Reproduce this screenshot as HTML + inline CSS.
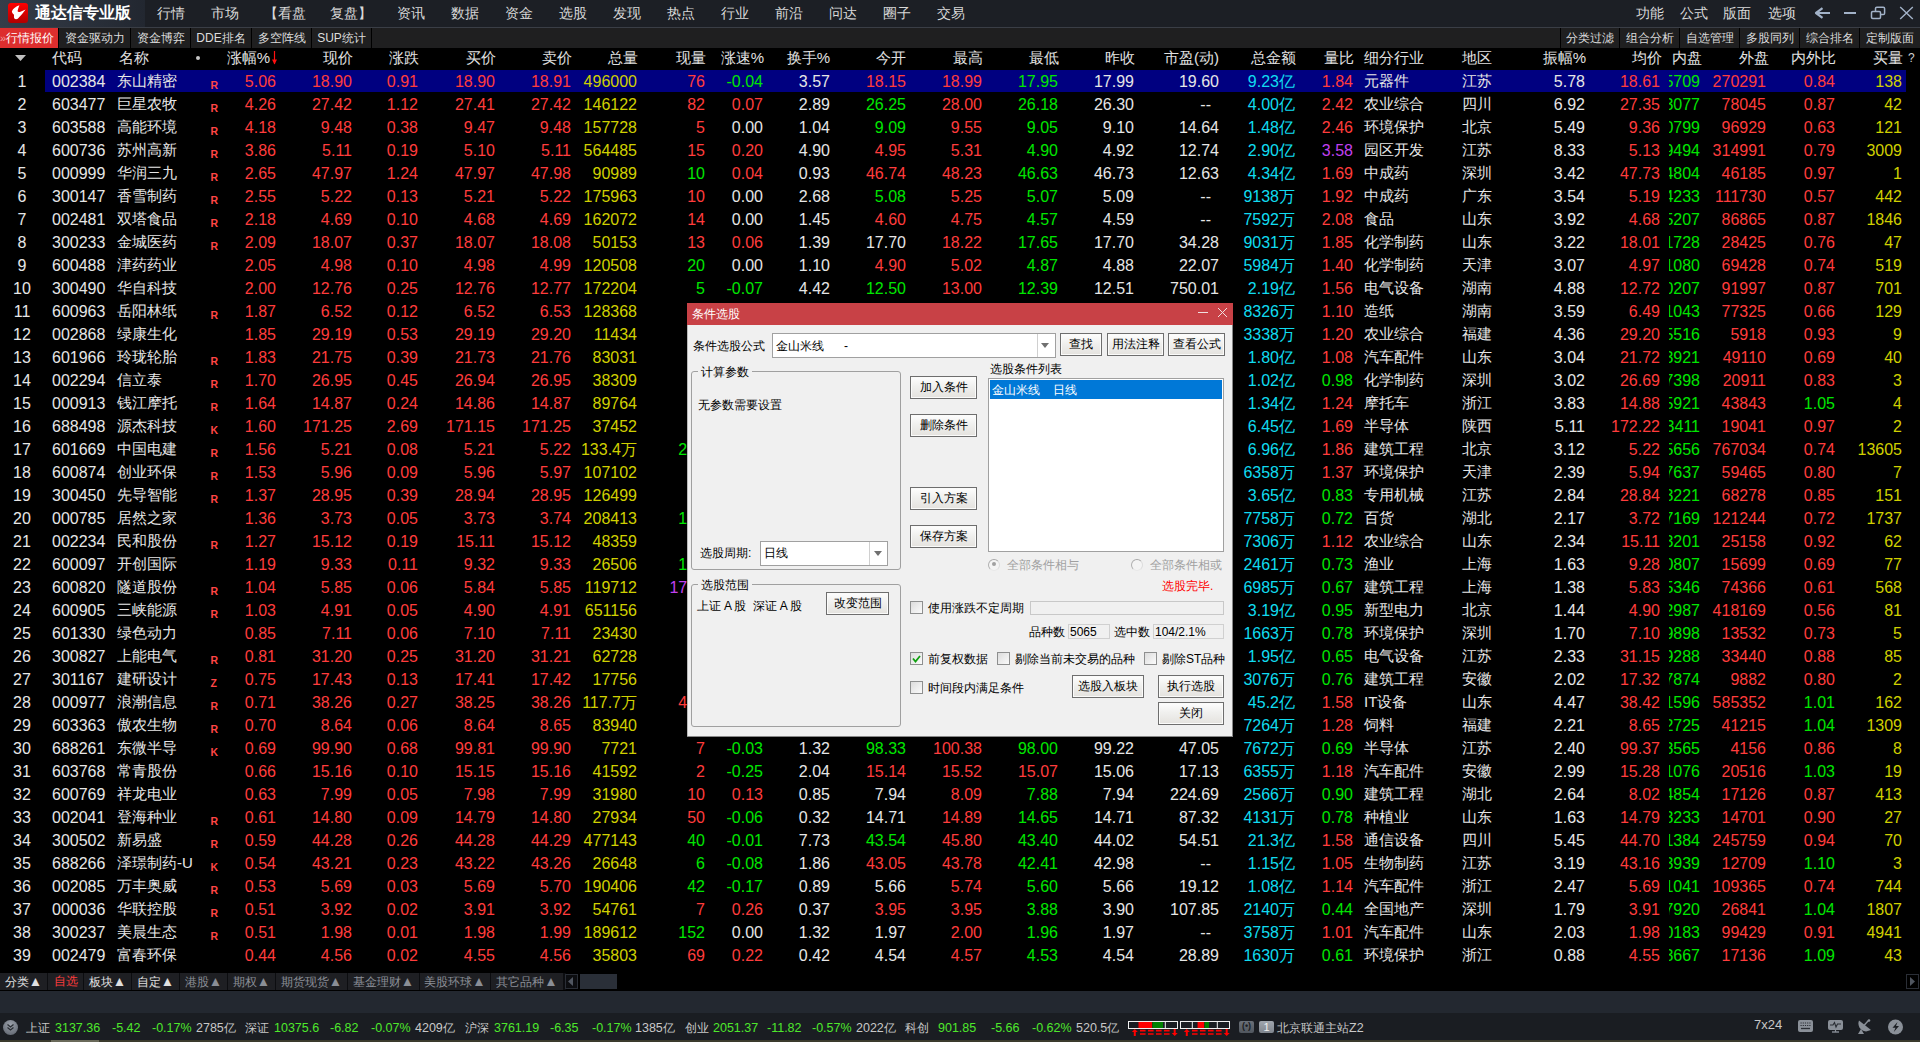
<!DOCTYPE html><html><head><meta charset="utf-8"><style>
*{margin:0;padding:0;box-sizing:border-box}
html,body{width:1920px;height:1042px;overflow:hidden;background:#000;font-family:"Liberation Sans",sans-serif;}
.a{position:absolute;white-space:nowrap}
.n{position:absolute;white-space:nowrap;text-align:right;width:120px;font-size:16px;line-height:23px;height:23px}
.l{position:absolute;white-space:nowrap;font-size:16px;line-height:23px;height:23px}
.h{position:absolute;white-space:nowrap;font-size:15px;line-height:22px;height:22px;top:47px;color:#e0e0e0}
.z{font-size:15px;line-height:22px}
.hr{text-align:right;width:120px}
.tab{position:absolute;top:28px;height:20px;background:#1e1f23;color:#dcdcdc;font-size:12px;line-height:20px;text-align:center}
.btab{position:absolute;top:973px;height:17px;background:#1e1f23;color:#e0e0e0;font-size:12px;line-height:17px}
.tri{font-size:13.5px;line-height:17px}
.mk{position:absolute;font-size:10.5px;font-weight:bold;color:#ff4646;line-height:10px}
.dlg{position:absolute;left:687px;top:303px;width:546px;height:434px;background:#f0f0f0;font-size:12px;color:#000;border-right:1px solid #888;border-bottom:1px solid #888;box-shadow:inset 1px 0 0 #b8b8b8}
.dlg .a{line-height:14px}
.btn{position:absolute;background:linear-gradient(#fefefe,#f0f0ee 45%,#e4e2de);border:1px solid #6e6e6e;box-shadow:inset 0 0 0 1px #fbfbfa;text-align:center;font-size:12px;line-height:20px;color:#000}
.cb{position:absolute;width:13px;height:13px;border:1px solid #8e8f8f;background:linear-gradient(135deg,#dcdcdc,#fbfbfb)}
.grp{position:absolute;border:1px solid #a0a0a0;border-radius:3px}
.gl{position:absolute;background:#f0f0f0;padding:0 3px;line-height:14px}
.fld{position:absolute;background:#fff;border:1px solid #a0a0a0}
.st{position:absolute;top:1014px;line-height:28px;height:28px;font-size:12.5px;white-space:nowrap}
.stz{font-size:12px}
</style></head><body>
<div class="a" style="left:0;top:0;width:1920px;height:27px;background:#1c1f25"></div>
<div class="a" style="left:0;top:0;width:145px;height:27px;background:linear-gradient(90deg,#353d49,#222730)"></div>
<div class="a" style="left:0;top:27px;width:1920px;height:1px;background:#3a3e46"></div>
<div class="a" style="left:8px;top:3px;width:20px;height:20px;border-radius:3px;background:linear-gradient(#ff0000,#b00000)"></div>
<svg class="a" style="left:8px;top:3px" width="20" height="20" viewBox="0 0 20 20"><path d="M11.4 2.2 C10.5 4.5 9.8 6.5 9.6 8.3 C9.8 9.2 11 9.3 12.5 8.8 L17.6 6.5 C15.5 9.5 12.5 13 9.8 15.8 C8.5 16.4 6.8 16.3 6.2 15.2 C5.8 13.8 6 12.5 6 11.7 C5 11 3.8 9.5 3.9 8.2 C5 5.5 8 3.5 11.4 2.2 Z" fill="#fff"/></svg>
<div class="a" style="left:35px;top:2px;font-size:16px;line-height:22px;font-weight:bold;color:#fff">通达信专业版</div>
<div class="a" style="left:157px;top:2px;font-size:14px;line-height:22px;color:#d8d8d8">行情</div>
<div class="a" style="left:211px;top:2px;font-size:14px;line-height:22px;color:#d8d8d8">市场</div>
<div class="a" style="left:264px;top:2px;font-size:14px;line-height:22px;color:#d8d8d8">【看盘</div>
<div class="a" style="left:330px;top:2px;font-size:14px;line-height:22px;color:#d8d8d8">复盘】</div>
<div class="a" style="left:397px;top:2px;font-size:14px;line-height:22px;color:#d8d8d8">资讯</div>
<div class="a" style="left:451px;top:2px;font-size:14px;line-height:22px;color:#d8d8d8">数据</div>
<div class="a" style="left:505px;top:2px;font-size:14px;line-height:22px;color:#d8d8d8">资金</div>
<div class="a" style="left:559px;top:2px;font-size:14px;line-height:22px;color:#d8d8d8">选股</div>
<div class="a" style="left:613px;top:2px;font-size:14px;line-height:22px;color:#d8d8d8">发现</div>
<div class="a" style="left:667px;top:2px;font-size:14px;line-height:22px;color:#d8d8d8">热点</div>
<div class="a" style="left:721px;top:2px;font-size:14px;line-height:22px;color:#d8d8d8">行业</div>
<div class="a" style="left:775px;top:2px;font-size:14px;line-height:22px;color:#d8d8d8">前沿</div>
<div class="a" style="left:829px;top:2px;font-size:14px;line-height:22px;color:#d8d8d8">问达</div>
<div class="a" style="left:883px;top:2px;font-size:14px;line-height:22px;color:#d8d8d8">圈子</div>
<div class="a" style="left:937px;top:2px;font-size:14px;line-height:22px;color:#d8d8d8">交易</div>
<div class="a" style="left:1636px;top:2px;font-size:14px;line-height:22px;color:#d8d8d8">功能</div>
<div class="a" style="left:1680px;top:2px;font-size:14px;line-height:22px;color:#d8d8d8">公式</div>
<div class="a" style="left:1723px;top:2px;font-size:14px;line-height:22px;color:#d8d8d8">版面</div>
<div class="a" style="left:1768px;top:2px;font-size:14px;line-height:22px;color:#d8d8d8">选项</div>
<svg class="a" style="left:1812px;top:5px" width="108" height="18" viewBox="0 0 108 18"><path d="M4 8 H18" stroke="#a2b2c8" stroke-width="2" fill="none"/><path d="M10.5 3.2 L4 8 L10.5 12.8" stroke="#a2b2c8" stroke-width="2.2" fill="none" stroke-linejoin="round"/><path d="M32 8 H44" stroke="#a2b2c8" stroke-width="2"/><path d="M63.5 6 V3.5 Q63.5 2.2 64.8 2.2 H71.3 Q72.6 2.2 72.6 3.5 V8.3 Q72.6 9.6 71.3 9.6 H69" stroke="#a2b2c8" stroke-width="1.5" fill="none"/><rect x="59.5" y="6.5" width="9" height="7" rx="1.2" stroke="#a2b2c8" stroke-width="1.5" fill="none"/><path d="M88.2 2 L100.8 14 M100.8 2 L88.2 14" stroke="#a2b2c8" stroke-width="1.4"/></svg>
<div class="a" style="left:0;top:28px;width:1920px;height:20px;background:#1f1f20"></div>
<div class="a" style="left:0;top:28px;width:58px;height:20px;background:#dd2e2e"></div>
<div class="a" style="left:58px;top:28px;width:1px;height:20px;background:#000"></div>
<div class="a" style="left:130px;top:28px;width:1px;height:20px;background:#000"></div>
<div class="a" style="left:190px;top:28px;width:1px;height:20px;background:#000"></div>
<div class="a" style="left:251px;top:28px;width:1px;height:20px;background:#000"></div>
<div class="a" style="left:311px;top:28px;width:1px;height:20px;background:#000"></div>
<div class="a" style="left:371px;top:28px;width:1px;height:20px;background:#000"></div>
<div class="a" style="left:1560px;top:28px;width:1px;height:20px;background:#000"></div>
<div class="a" style="left:1619px;top:28px;width:1px;height:20px;background:#000"></div>
<div class="a" style="left:1679px;top:28px;width:1px;height:20px;background:#000"></div>
<div class="a" style="left:1739px;top:28px;width:1px;height:20px;background:#000"></div>
<div class="a" style="left:1799px;top:28px;width:1px;height:20px;background:#000"></div>
<div class="a" style="left:1859px;top:28px;width:1px;height:20px;background:#000"></div>
<div class="a" style="left:2px;top:28px;width:55px;height:20px;font-size:12px;line-height:20px;text-align:center;color:#fff">行情报价</div>
<div class="a" style="left:59px;top:28px;width:71px;height:20px;font-size:12px;line-height:20px;text-align:center;color:#dcdcdc">资金驱动力</div>
<div class="a" style="left:131px;top:28px;width:59px;height:20px;font-size:12px;line-height:20px;text-align:center;color:#dcdcdc">资金博弈</div>
<div class="a" style="left:191px;top:28px;width:60px;height:20px;font-size:12px;line-height:20px;text-align:center;color:#dcdcdc">DDE排名</div>
<div class="a" style="left:252px;top:28px;width:59px;height:20px;font-size:12px;line-height:20px;text-align:center;color:#dcdcdc">多空阵线</div>
<div class="a" style="left:312px;top:28px;width:59px;height:20px;font-size:12px;line-height:20px;text-align:center;color:#dcdcdc">SUP统计</div>
<div class="a" style="left:1561px;top:28px;width:58px;height:20px;font-size:12px;line-height:20px;text-align:center;color:#dcdcdc">分类过滤</div>
<div class="a" style="left:1620px;top:28px;width:59px;height:20px;font-size:12px;line-height:20px;text-align:center;color:#dcdcdc">组合分析</div>
<div class="a" style="left:1680px;top:28px;width:59px;height:20px;font-size:12px;line-height:20px;text-align:center;color:#dcdcdc">自选管理</div>
<div class="a" style="left:1740px;top:28px;width:59px;height:20px;font-size:12px;line-height:20px;text-align:center;color:#dcdcdc">多股同列</div>
<div class="a" style="left:1800px;top:28px;width:59px;height:20px;font-size:12px;line-height:20px;text-align:center;color:#dcdcdc">综合排名</div>
<div class="a" style="left:1860px;top:28px;width:60px;height:20px;font-size:12px;line-height:20px;text-align:center;color:#dcdcdc">定制版面</div>
<div class="a" style="left:0px;top:31px;font-size:11px;line-height:14px;color:#f0a0a0">»</div>
<div class="h" style="left:52px">代码</div>
<div class="h" style="left:119px">名称</div>
<div class="h hr" style="left:150px">涨幅%</div>
<div class="h hr" style="left:233px">现价</div>
<div class="h hr" style="left:299px">涨跌</div>
<div class="h hr" style="left:376px">买价</div>
<div class="h hr" style="left:452px">卖价</div>
<div class="h hr" style="left:518px">总量</div>
<div class="h hr" style="left:586px">现量</div>
<div class="h hr" style="left:644px">涨速%</div>
<div class="h hr" style="left:710px">换手%</div>
<div class="h hr" style="left:786px">今开</div>
<div class="h hr" style="left:863px">最高</div>
<div class="h hr" style="left:939px">最低</div>
<div class="h hr" style="left:1015px">昨收</div>
<div class="h hr" style="left:1099px">市盈(动)</div>
<div class="h hr" style="left:1176px">总金额</div>
<div class="h hr" style="left:1234px">量比</div>
<div class="h" style="left:1364px">细分行业</div>
<div class="h" style="left:1462px">地区</div>
<div class="h hr" style="left:1466px">振幅%</div>
<div class="h hr" style="left:1542px">均价</div>
<div class="h hr" style="left:1582px">内盘</div>
<div class="h hr" style="left:1649px">外盘</div>
<div class="h hr" style="left:1716px">内外比</div>
<div class="h hr" style="left:1783px">买量</div>
<svg class="a" style="left:15px;top:55px" width="12" height="8"><path d="M0 0 H11 L5.5 6 Z" fill="#c0c0c0"/></svg>
<div class="a" style="left:196px;top:56px;width:4px;height:4px;border-radius:2px;background:#c8c8c8"></div>
<svg class="a" style="left:271px;top:50px" width="7" height="16"><path d="M3.5 1 V14" stroke="#ff1010" stroke-width="1.2"/><path d="M1 9.5 L3.5 14.5 L6 9.5 Z" fill="#ff1010"/></svg>
<div class="a" style="left:1908px;top:50px;font-size:12px;line-height:16px;color:#d0d0d0">?</div>
<div class="a" style="left:45px;top:70px;width:1861px;height:22px;background:#000080"></div>
<div class="l" style="left:2px;width:40px;text-align:center;top:70px;color:#e6e6e6">1</div>
<div class="l" style="left:52px;top:70px;color:#e6e6e6">002384</div>
<div class="l z" style="left:117px;top:70px;color:#e6e6e6">东山精密</div>
<div class="mk" style="left:210.5px;top:80px">R</div>
<div class="n" style="left:156px;top:70px;color:#ff3c3c">5.06</div>
<div class="n" style="left:232px;top:70px;color:#ff3c3c">18.90</div>
<div class="n" style="left:298px;top:70px;color:#ff3c3c">0.91</div>
<div class="n" style="left:375px;top:70px;color:#ff3c3c">18.90</div>
<div class="n" style="left:451px;top:70px;color:#ff3c3c">18.91</div>
<div class="n" style="left:517px;top:70px;color:#d0d000">496000</div>
<div class="n" style="left:585px;top:70px;color:#ff3c3c">76</div>
<div class="n" style="left:643px;top:70px;color:#00e600">-0.04</div>
<div class="n" style="left:710px;top:70px;color:#e6e6e6">3.57</div>
<div class="n" style="left:786px;top:70px;color:#ff3c3c">18.15</div>
<div class="n" style="left:862px;top:70px;color:#ff3c3c">18.99</div>
<div class="n" style="left:938px;top:70px;color:#00e600">17.95</div>
<div class="n" style="left:1014px;top:70px;color:#e6e6e6">17.99</div>
<div class="n" style="left:1099px;top:70px;color:#e6e6e6">19.60</div>
<div class="n" style="left:1175px;top:70px;color:#10dcf0">9.23亿</div>
<div class="n" style="left:1233px;top:70px;color:#ff3c3c">1.84</div>
<div class="n" style="left:1465px;top:70px;color:#e6e6e6">5.78</div>
<div class="n" style="left:1540px;top:70px;color:#ff3c3c">18.61</div>
<div class="n" style="left:1646px;top:70px;color:#ff3c3c">270291</div>
<div class="n" style="left:1715px;top:70px;color:#ff3c3c">0.84</div>
<div class="n" style="left:1782px;top:70px;color:#d0d000">138</div>
<div class="l z" style="left:1364px;top:70px;color:#e6e6e6">元器件</div>
<div class="l z" style="left:1462px;top:70px;color:#e6e6e6">江苏</div>
<div class="a" style="left:1669px;top:70px;width:33px;height:23px;overflow:hidden"><div class="n" style="left:-89px;top:0;color:#00e600">5709</div></div>
<div class="l" style="left:2px;width:40px;text-align:center;top:93px;color:#e6e6e6">2</div>
<div class="l" style="left:52px;top:93px;color:#e6e6e6">603477</div>
<div class="l z" style="left:117px;top:93px;color:#e6e6e6">巨星农牧</div>
<div class="mk" style="left:210.5px;top:103px">R</div>
<div class="n" style="left:156px;top:93px;color:#ff3c3c">4.26</div>
<div class="n" style="left:232px;top:93px;color:#ff3c3c">27.42</div>
<div class="n" style="left:298px;top:93px;color:#ff3c3c">1.12</div>
<div class="n" style="left:375px;top:93px;color:#ff3c3c">27.41</div>
<div class="n" style="left:451px;top:93px;color:#ff3c3c">27.42</div>
<div class="n" style="left:517px;top:93px;color:#d0d000">146122</div>
<div class="n" style="left:585px;top:93px;color:#ff3c3c">82</div>
<div class="n" style="left:643px;top:93px;color:#ff3c3c">0.07</div>
<div class="n" style="left:710px;top:93px;color:#e6e6e6">2.89</div>
<div class="n" style="left:786px;top:93px;color:#00e600">26.25</div>
<div class="n" style="left:862px;top:93px;color:#ff3c3c">28.00</div>
<div class="n" style="left:938px;top:93px;color:#00e600">26.18</div>
<div class="n" style="left:1014px;top:93px;color:#e6e6e6">26.30</div>
<div class="n" style="left:1091px;top:93px;color:#e6e6e6">--</div>
<div class="n" style="left:1175px;top:93px;color:#10dcf0">4.00亿</div>
<div class="n" style="left:1233px;top:93px;color:#ff3c3c">2.42</div>
<div class="n" style="left:1465px;top:93px;color:#e6e6e6">6.92</div>
<div class="n" style="left:1540px;top:93px;color:#ff3c3c">27.35</div>
<div class="n" style="left:1646px;top:93px;color:#ff3c3c">78045</div>
<div class="n" style="left:1715px;top:93px;color:#ff3c3c">0.87</div>
<div class="n" style="left:1782px;top:93px;color:#d0d000">42</div>
<div class="l z" style="left:1364px;top:93px;color:#e6e6e6">农业综合</div>
<div class="l z" style="left:1462px;top:93px;color:#e6e6e6">四川</div>
<div class="a" style="left:1669px;top:93px;width:33px;height:23px;overflow:hidden"><div class="n" style="left:-89px;top:0;color:#00e600">3077</div></div>
<div class="l" style="left:2px;width:40px;text-align:center;top:116px;color:#e6e6e6">3</div>
<div class="l" style="left:52px;top:116px;color:#e6e6e6">603588</div>
<div class="l z" style="left:117px;top:116px;color:#e6e6e6">高能环境</div>
<div class="mk" style="left:210.5px;top:126px">R</div>
<div class="n" style="left:156px;top:116px;color:#ff3c3c">4.18</div>
<div class="n" style="left:232px;top:116px;color:#ff3c3c">9.48</div>
<div class="n" style="left:298px;top:116px;color:#ff3c3c">0.38</div>
<div class="n" style="left:375px;top:116px;color:#ff3c3c">9.47</div>
<div class="n" style="left:451px;top:116px;color:#ff3c3c">9.48</div>
<div class="n" style="left:517px;top:116px;color:#d0d000">157728</div>
<div class="n" style="left:585px;top:116px;color:#ff3c3c">5</div>
<div class="n" style="left:643px;top:116px;color:#e6e6e6">0.00</div>
<div class="n" style="left:710px;top:116px;color:#e6e6e6">1.04</div>
<div class="n" style="left:786px;top:116px;color:#00e600">9.09</div>
<div class="n" style="left:862px;top:116px;color:#ff3c3c">9.55</div>
<div class="n" style="left:938px;top:116px;color:#00e600">9.05</div>
<div class="n" style="left:1014px;top:116px;color:#e6e6e6">9.10</div>
<div class="n" style="left:1099px;top:116px;color:#e6e6e6">14.64</div>
<div class="n" style="left:1175px;top:116px;color:#10dcf0">1.48亿</div>
<div class="n" style="left:1233px;top:116px;color:#ff3c3c">2.46</div>
<div class="n" style="left:1465px;top:116px;color:#e6e6e6">5.49</div>
<div class="n" style="left:1540px;top:116px;color:#ff3c3c">9.36</div>
<div class="n" style="left:1646px;top:116px;color:#ff3c3c">96929</div>
<div class="n" style="left:1715px;top:116px;color:#ff3c3c">0.63</div>
<div class="n" style="left:1782px;top:116px;color:#d0d000">121</div>
<div class="l z" style="left:1364px;top:116px;color:#e6e6e6">环境保护</div>
<div class="l z" style="left:1462px;top:116px;color:#e6e6e6">北京</div>
<div class="a" style="left:1669px;top:116px;width:33px;height:23px;overflow:hidden"><div class="n" style="left:-89px;top:0;color:#00e600">0799</div></div>
<div class="l" style="left:2px;width:40px;text-align:center;top:139px;color:#e6e6e6">4</div>
<div class="l" style="left:52px;top:139px;color:#e6e6e6">600736</div>
<div class="l z" style="left:117px;top:139px;color:#e6e6e6">苏州高新</div>
<div class="mk" style="left:210.5px;top:149px">R</div>
<div class="n" style="left:156px;top:139px;color:#ff3c3c">3.86</div>
<div class="n" style="left:232px;top:139px;color:#ff3c3c">5.11</div>
<div class="n" style="left:298px;top:139px;color:#ff3c3c">0.19</div>
<div class="n" style="left:375px;top:139px;color:#ff3c3c">5.10</div>
<div class="n" style="left:451px;top:139px;color:#ff3c3c">5.11</div>
<div class="n" style="left:517px;top:139px;color:#d0d000">564485</div>
<div class="n" style="left:585px;top:139px;color:#ff3c3c">15</div>
<div class="n" style="left:643px;top:139px;color:#ff3c3c">0.20</div>
<div class="n" style="left:710px;top:139px;color:#e6e6e6">4.90</div>
<div class="n" style="left:786px;top:139px;color:#ff3c3c">4.95</div>
<div class="n" style="left:862px;top:139px;color:#ff3c3c">5.31</div>
<div class="n" style="left:938px;top:139px;color:#00e600">4.90</div>
<div class="n" style="left:1014px;top:139px;color:#e6e6e6">4.92</div>
<div class="n" style="left:1099px;top:139px;color:#e6e6e6">12.74</div>
<div class="n" style="left:1175px;top:139px;color:#10dcf0">2.90亿</div>
<div class="n" style="left:1233px;top:139px;color:#c040f0">3.58</div>
<div class="n" style="left:1465px;top:139px;color:#e6e6e6">8.33</div>
<div class="n" style="left:1540px;top:139px;color:#ff3c3c">5.13</div>
<div class="n" style="left:1646px;top:139px;color:#ff3c3c">314991</div>
<div class="n" style="left:1715px;top:139px;color:#ff3c3c">0.79</div>
<div class="n" style="left:1782px;top:139px;color:#d0d000">3009</div>
<div class="l z" style="left:1364px;top:139px;color:#e6e6e6">园区开发</div>
<div class="l z" style="left:1462px;top:139px;color:#e6e6e6">江苏</div>
<div class="a" style="left:1669px;top:139px;width:33px;height:23px;overflow:hidden"><div class="n" style="left:-89px;top:0;color:#00e600">9494</div></div>
<div class="l" style="left:2px;width:40px;text-align:center;top:162px;color:#e6e6e6">5</div>
<div class="l" style="left:52px;top:162px;color:#e6e6e6">000999</div>
<div class="l z" style="left:117px;top:162px;color:#e6e6e6">华润三九</div>
<div class="mk" style="left:210.5px;top:172px">R</div>
<div class="n" style="left:156px;top:162px;color:#ff3c3c">2.65</div>
<div class="n" style="left:232px;top:162px;color:#ff3c3c">47.97</div>
<div class="n" style="left:298px;top:162px;color:#ff3c3c">1.24</div>
<div class="n" style="left:375px;top:162px;color:#ff3c3c">47.97</div>
<div class="n" style="left:451px;top:162px;color:#ff3c3c">47.98</div>
<div class="n" style="left:517px;top:162px;color:#d0d000">90989</div>
<div class="n" style="left:585px;top:162px;color:#00e600">10</div>
<div class="n" style="left:643px;top:162px;color:#ff3c3c">0.04</div>
<div class="n" style="left:710px;top:162px;color:#e6e6e6">0.93</div>
<div class="n" style="left:786px;top:162px;color:#ff3c3c">46.74</div>
<div class="n" style="left:862px;top:162px;color:#ff3c3c">48.23</div>
<div class="n" style="left:938px;top:162px;color:#00e600">46.63</div>
<div class="n" style="left:1014px;top:162px;color:#e6e6e6">46.73</div>
<div class="n" style="left:1099px;top:162px;color:#e6e6e6">12.63</div>
<div class="n" style="left:1175px;top:162px;color:#10dcf0">4.34亿</div>
<div class="n" style="left:1233px;top:162px;color:#ff3c3c">1.69</div>
<div class="n" style="left:1465px;top:162px;color:#e6e6e6">3.42</div>
<div class="n" style="left:1540px;top:162px;color:#ff3c3c">47.73</div>
<div class="n" style="left:1646px;top:162px;color:#ff3c3c">46185</div>
<div class="n" style="left:1715px;top:162px;color:#ff3c3c">0.97</div>
<div class="n" style="left:1782px;top:162px;color:#d0d000">1</div>
<div class="l z" style="left:1364px;top:162px;color:#e6e6e6">中成药</div>
<div class="l z" style="left:1462px;top:162px;color:#e6e6e6">深圳</div>
<div class="a" style="left:1669px;top:162px;width:33px;height:23px;overflow:hidden"><div class="n" style="left:-89px;top:0;color:#00e600">4804</div></div>
<div class="l" style="left:2px;width:40px;text-align:center;top:185px;color:#e6e6e6">6</div>
<div class="l" style="left:52px;top:185px;color:#e6e6e6">300147</div>
<div class="l z" style="left:117px;top:185px;color:#e6e6e6">香雪制药</div>
<div class="mk" style="left:210.5px;top:195px">R</div>
<div class="n" style="left:156px;top:185px;color:#ff3c3c">2.55</div>
<div class="n" style="left:232px;top:185px;color:#ff3c3c">5.22</div>
<div class="n" style="left:298px;top:185px;color:#ff3c3c">0.13</div>
<div class="n" style="left:375px;top:185px;color:#ff3c3c">5.21</div>
<div class="n" style="left:451px;top:185px;color:#ff3c3c">5.22</div>
<div class="n" style="left:517px;top:185px;color:#d0d000">175963</div>
<div class="n" style="left:585px;top:185px;color:#ff3c3c">10</div>
<div class="n" style="left:643px;top:185px;color:#e6e6e6">0.00</div>
<div class="n" style="left:710px;top:185px;color:#e6e6e6">2.68</div>
<div class="n" style="left:786px;top:185px;color:#00e600">5.08</div>
<div class="n" style="left:862px;top:185px;color:#ff3c3c">5.25</div>
<div class="n" style="left:938px;top:185px;color:#00e600">5.07</div>
<div class="n" style="left:1014px;top:185px;color:#e6e6e6">5.09</div>
<div class="n" style="left:1091px;top:185px;color:#e6e6e6">--</div>
<div class="n" style="left:1175px;top:185px;color:#10dcf0">9138万</div>
<div class="n" style="left:1233px;top:185px;color:#ff3c3c">1.92</div>
<div class="n" style="left:1465px;top:185px;color:#e6e6e6">3.54</div>
<div class="n" style="left:1540px;top:185px;color:#ff3c3c">5.19</div>
<div class="n" style="left:1646px;top:185px;color:#ff3c3c">111730</div>
<div class="n" style="left:1715px;top:185px;color:#ff3c3c">0.57</div>
<div class="n" style="left:1782px;top:185px;color:#d0d000">442</div>
<div class="l z" style="left:1364px;top:185px;color:#e6e6e6">中成药</div>
<div class="l z" style="left:1462px;top:185px;color:#e6e6e6">广东</div>
<div class="a" style="left:1669px;top:185px;width:33px;height:23px;overflow:hidden"><div class="n" style="left:-89px;top:0;color:#00e600">4233</div></div>
<div class="l" style="left:2px;width:40px;text-align:center;top:208px;color:#e6e6e6">7</div>
<div class="l" style="left:52px;top:208px;color:#e6e6e6">002481</div>
<div class="l z" style="left:117px;top:208px;color:#e6e6e6">双塔食品</div>
<div class="mk" style="left:210.5px;top:218px">R</div>
<div class="n" style="left:156px;top:208px;color:#ff3c3c">2.18</div>
<div class="n" style="left:232px;top:208px;color:#ff3c3c">4.69</div>
<div class="n" style="left:298px;top:208px;color:#ff3c3c">0.10</div>
<div class="n" style="left:375px;top:208px;color:#ff3c3c">4.68</div>
<div class="n" style="left:451px;top:208px;color:#ff3c3c">4.69</div>
<div class="n" style="left:517px;top:208px;color:#d0d000">162072</div>
<div class="n" style="left:585px;top:208px;color:#ff3c3c">14</div>
<div class="n" style="left:643px;top:208px;color:#e6e6e6">0.00</div>
<div class="n" style="left:710px;top:208px;color:#e6e6e6">1.45</div>
<div class="n" style="left:786px;top:208px;color:#ff3c3c">4.60</div>
<div class="n" style="left:862px;top:208px;color:#ff3c3c">4.75</div>
<div class="n" style="left:938px;top:208px;color:#00e600">4.57</div>
<div class="n" style="left:1014px;top:208px;color:#e6e6e6">4.59</div>
<div class="n" style="left:1091px;top:208px;color:#e6e6e6">--</div>
<div class="n" style="left:1175px;top:208px;color:#10dcf0">7592万</div>
<div class="n" style="left:1233px;top:208px;color:#ff3c3c">2.08</div>
<div class="n" style="left:1465px;top:208px;color:#e6e6e6">3.92</div>
<div class="n" style="left:1540px;top:208px;color:#ff3c3c">4.68</div>
<div class="n" style="left:1646px;top:208px;color:#ff3c3c">86865</div>
<div class="n" style="left:1715px;top:208px;color:#ff3c3c">0.87</div>
<div class="n" style="left:1782px;top:208px;color:#d0d000">1846</div>
<div class="l z" style="left:1364px;top:208px;color:#e6e6e6">食品</div>
<div class="l z" style="left:1462px;top:208px;color:#e6e6e6">山东</div>
<div class="a" style="left:1669px;top:208px;width:33px;height:23px;overflow:hidden"><div class="n" style="left:-89px;top:0;color:#00e600">5207</div></div>
<div class="l" style="left:2px;width:40px;text-align:center;top:231px;color:#e6e6e6">8</div>
<div class="l" style="left:52px;top:231px;color:#e6e6e6">300233</div>
<div class="l z" style="left:117px;top:231px;color:#e6e6e6">金城医药</div>
<div class="mk" style="left:210.5px;top:241px">R</div>
<div class="n" style="left:156px;top:231px;color:#ff3c3c">2.09</div>
<div class="n" style="left:232px;top:231px;color:#ff3c3c">18.07</div>
<div class="n" style="left:298px;top:231px;color:#ff3c3c">0.37</div>
<div class="n" style="left:375px;top:231px;color:#ff3c3c">18.07</div>
<div class="n" style="left:451px;top:231px;color:#ff3c3c">18.08</div>
<div class="n" style="left:517px;top:231px;color:#d0d000">50153</div>
<div class="n" style="left:585px;top:231px;color:#ff3c3c">13</div>
<div class="n" style="left:643px;top:231px;color:#ff3c3c">0.06</div>
<div class="n" style="left:710px;top:231px;color:#e6e6e6">1.39</div>
<div class="n" style="left:786px;top:231px;color:#e6e6e6">17.70</div>
<div class="n" style="left:862px;top:231px;color:#ff3c3c">18.22</div>
<div class="n" style="left:938px;top:231px;color:#00e600">17.65</div>
<div class="n" style="left:1014px;top:231px;color:#e6e6e6">17.70</div>
<div class="n" style="left:1099px;top:231px;color:#e6e6e6">34.28</div>
<div class="n" style="left:1175px;top:231px;color:#10dcf0">9031万</div>
<div class="n" style="left:1233px;top:231px;color:#ff3c3c">1.85</div>
<div class="n" style="left:1465px;top:231px;color:#e6e6e6">3.22</div>
<div class="n" style="left:1540px;top:231px;color:#ff3c3c">18.01</div>
<div class="n" style="left:1646px;top:231px;color:#ff3c3c">28425</div>
<div class="n" style="left:1715px;top:231px;color:#ff3c3c">0.76</div>
<div class="n" style="left:1782px;top:231px;color:#d0d000">47</div>
<div class="l z" style="left:1364px;top:231px;color:#e6e6e6">化学制药</div>
<div class="l z" style="left:1462px;top:231px;color:#e6e6e6">山东</div>
<div class="a" style="left:1669px;top:231px;width:33px;height:23px;overflow:hidden"><div class="n" style="left:-89px;top:0;color:#00e600">1728</div></div>
<div class="l" style="left:2px;width:40px;text-align:center;top:254px;color:#e6e6e6">9</div>
<div class="l" style="left:52px;top:254px;color:#e6e6e6">600488</div>
<div class="l z" style="left:117px;top:254px;color:#e6e6e6">津药药业</div>
<div class="n" style="left:156px;top:254px;color:#ff3c3c">2.05</div>
<div class="n" style="left:232px;top:254px;color:#ff3c3c">4.98</div>
<div class="n" style="left:298px;top:254px;color:#ff3c3c">0.10</div>
<div class="n" style="left:375px;top:254px;color:#ff3c3c">4.98</div>
<div class="n" style="left:451px;top:254px;color:#ff3c3c">4.99</div>
<div class="n" style="left:517px;top:254px;color:#d0d000">120508</div>
<div class="n" style="left:585px;top:254px;color:#00e600">20</div>
<div class="n" style="left:643px;top:254px;color:#e6e6e6">0.00</div>
<div class="n" style="left:710px;top:254px;color:#e6e6e6">1.10</div>
<div class="n" style="left:786px;top:254px;color:#ff3c3c">4.90</div>
<div class="n" style="left:862px;top:254px;color:#ff3c3c">5.02</div>
<div class="n" style="left:938px;top:254px;color:#00e600">4.87</div>
<div class="n" style="left:1014px;top:254px;color:#e6e6e6">4.88</div>
<div class="n" style="left:1099px;top:254px;color:#e6e6e6">22.07</div>
<div class="n" style="left:1175px;top:254px;color:#10dcf0">5984万</div>
<div class="n" style="left:1233px;top:254px;color:#ff3c3c">1.40</div>
<div class="n" style="left:1465px;top:254px;color:#e6e6e6">3.07</div>
<div class="n" style="left:1540px;top:254px;color:#ff3c3c">4.97</div>
<div class="n" style="left:1646px;top:254px;color:#ff3c3c">69428</div>
<div class="n" style="left:1715px;top:254px;color:#ff3c3c">0.74</div>
<div class="n" style="left:1782px;top:254px;color:#d0d000">519</div>
<div class="l z" style="left:1364px;top:254px;color:#e6e6e6">化学制药</div>
<div class="l z" style="left:1462px;top:254px;color:#e6e6e6">天津</div>
<div class="a" style="left:1669px;top:254px;width:33px;height:23px;overflow:hidden"><div class="n" style="left:-89px;top:0;color:#00e600">1080</div></div>
<div class="l" style="left:2px;width:40px;text-align:center;top:277px;color:#e6e6e6">10</div>
<div class="l" style="left:52px;top:277px;color:#e6e6e6">300490</div>
<div class="l z" style="left:117px;top:277px;color:#e6e6e6">华自科技</div>
<div class="n" style="left:156px;top:277px;color:#ff3c3c">2.00</div>
<div class="n" style="left:232px;top:277px;color:#ff3c3c">12.76</div>
<div class="n" style="left:298px;top:277px;color:#ff3c3c">0.25</div>
<div class="n" style="left:375px;top:277px;color:#ff3c3c">12.76</div>
<div class="n" style="left:451px;top:277px;color:#ff3c3c">12.77</div>
<div class="n" style="left:517px;top:277px;color:#d0d000">172204</div>
<div class="n" style="left:585px;top:277px;color:#00e600">5</div>
<div class="n" style="left:643px;top:277px;color:#00e600">-0.07</div>
<div class="n" style="left:710px;top:277px;color:#e6e6e6">4.42</div>
<div class="n" style="left:786px;top:277px;color:#00e600">12.50</div>
<div class="n" style="left:862px;top:277px;color:#ff3c3c">13.00</div>
<div class="n" style="left:938px;top:277px;color:#00e600">12.39</div>
<div class="n" style="left:1014px;top:277px;color:#e6e6e6">12.51</div>
<div class="n" style="left:1099px;top:277px;color:#e6e6e6">750.01</div>
<div class="n" style="left:1175px;top:277px;color:#10dcf0">2.19亿</div>
<div class="n" style="left:1233px;top:277px;color:#ff3c3c">1.56</div>
<div class="n" style="left:1465px;top:277px;color:#e6e6e6">4.88</div>
<div class="n" style="left:1540px;top:277px;color:#ff3c3c">12.72</div>
<div class="n" style="left:1646px;top:277px;color:#ff3c3c">91997</div>
<div class="n" style="left:1715px;top:277px;color:#ff3c3c">0.87</div>
<div class="n" style="left:1782px;top:277px;color:#d0d000">701</div>
<div class="l z" style="left:1364px;top:277px;color:#e6e6e6">电气设备</div>
<div class="l z" style="left:1462px;top:277px;color:#e6e6e6">湖南</div>
<div class="a" style="left:1669px;top:277px;width:33px;height:23px;overflow:hidden"><div class="n" style="left:-89px;top:0;color:#00e600">0207</div></div>
<div class="l" style="left:2px;width:40px;text-align:center;top:300px;color:#e6e6e6">11</div>
<div class="l" style="left:52px;top:300px;color:#e6e6e6">600963</div>
<div class="l z" style="left:117px;top:300px;color:#e6e6e6">岳阳林纸</div>
<div class="mk" style="left:210.5px;top:310px">R</div>
<div class="n" style="left:156px;top:300px;color:#ff3c3c">1.87</div>
<div class="n" style="left:232px;top:300px;color:#ff3c3c">6.52</div>
<div class="n" style="left:298px;top:300px;color:#ff3c3c">0.12</div>
<div class="n" style="left:375px;top:300px;color:#ff3c3c">6.52</div>
<div class="n" style="left:451px;top:300px;color:#ff3c3c">6.53</div>
<div class="n" style="left:517px;top:300px;color:#d0d000">128368</div>
<div class="n" style="left:1175px;top:300px;color:#10dcf0">8326万</div>
<div class="n" style="left:1233px;top:300px;color:#ff3c3c">1.10</div>
<div class="n" style="left:1465px;top:300px;color:#e6e6e6">3.59</div>
<div class="n" style="left:1540px;top:300px;color:#ff3c3c">6.49</div>
<div class="n" style="left:1646px;top:300px;color:#ff3c3c">77325</div>
<div class="n" style="left:1715px;top:300px;color:#ff3c3c">0.66</div>
<div class="n" style="left:1782px;top:300px;color:#d0d000">129</div>
<div class="l z" style="left:1364px;top:300px;color:#e6e6e6">造纸</div>
<div class="l z" style="left:1462px;top:300px;color:#e6e6e6">湖南</div>
<div class="a" style="left:1669px;top:300px;width:33px;height:23px;overflow:hidden"><div class="n" style="left:-89px;top:0;color:#00e600">1043</div></div>
<div class="l" style="left:2px;width:40px;text-align:center;top:323px;color:#e6e6e6">12</div>
<div class="l" style="left:52px;top:323px;color:#e6e6e6">002868</div>
<div class="l z" style="left:117px;top:323px;color:#e6e6e6">绿康生化</div>
<div class="n" style="left:156px;top:323px;color:#ff3c3c">1.85</div>
<div class="n" style="left:232px;top:323px;color:#ff3c3c">29.19</div>
<div class="n" style="left:298px;top:323px;color:#ff3c3c">0.53</div>
<div class="n" style="left:375px;top:323px;color:#ff3c3c">29.19</div>
<div class="n" style="left:451px;top:323px;color:#ff3c3c">29.20</div>
<div class="n" style="left:517px;top:323px;color:#d0d000">11434</div>
<div class="n" style="left:1175px;top:323px;color:#10dcf0">3338万</div>
<div class="n" style="left:1233px;top:323px;color:#ff3c3c">1.20</div>
<div class="n" style="left:1465px;top:323px;color:#e6e6e6">4.36</div>
<div class="n" style="left:1540px;top:323px;color:#ff3c3c">29.20</div>
<div class="n" style="left:1646px;top:323px;color:#ff3c3c">5918</div>
<div class="n" style="left:1715px;top:323px;color:#ff3c3c">0.93</div>
<div class="n" style="left:1782px;top:323px;color:#d0d000">9</div>
<div class="l z" style="left:1364px;top:323px;color:#e6e6e6">农业综合</div>
<div class="l z" style="left:1462px;top:323px;color:#e6e6e6">福建</div>
<div class="a" style="left:1669px;top:323px;width:33px;height:23px;overflow:hidden"><div class="n" style="left:-89px;top:0;color:#00e600">5516</div></div>
<div class="l" style="left:2px;width:40px;text-align:center;top:346px;color:#e6e6e6">13</div>
<div class="l" style="left:52px;top:346px;color:#e6e6e6">601966</div>
<div class="l z" style="left:117px;top:346px;color:#e6e6e6">玲珑轮胎</div>
<div class="mk" style="left:210.5px;top:356px">R</div>
<div class="n" style="left:156px;top:346px;color:#ff3c3c">1.83</div>
<div class="n" style="left:232px;top:346px;color:#ff3c3c">21.75</div>
<div class="n" style="left:298px;top:346px;color:#ff3c3c">0.39</div>
<div class="n" style="left:375px;top:346px;color:#ff3c3c">21.73</div>
<div class="n" style="left:451px;top:346px;color:#ff3c3c">21.76</div>
<div class="n" style="left:517px;top:346px;color:#d0d000">83031</div>
<div class="n" style="left:1175px;top:346px;color:#10dcf0">1.80亿</div>
<div class="n" style="left:1233px;top:346px;color:#ff3c3c">1.08</div>
<div class="n" style="left:1465px;top:346px;color:#e6e6e6">3.04</div>
<div class="n" style="left:1540px;top:346px;color:#ff3c3c">21.72</div>
<div class="n" style="left:1646px;top:346px;color:#ff3c3c">49110</div>
<div class="n" style="left:1715px;top:346px;color:#ff3c3c">0.69</div>
<div class="n" style="left:1782px;top:346px;color:#d0d000">40</div>
<div class="l z" style="left:1364px;top:346px;color:#e6e6e6">汽车配件</div>
<div class="l z" style="left:1462px;top:346px;color:#e6e6e6">山东</div>
<div class="a" style="left:1669px;top:346px;width:33px;height:23px;overflow:hidden"><div class="n" style="left:-89px;top:0;color:#00e600">3921</div></div>
<div class="l" style="left:2px;width:40px;text-align:center;top:369px;color:#e6e6e6">14</div>
<div class="l" style="left:52px;top:369px;color:#e6e6e6">002294</div>
<div class="l z" style="left:117px;top:369px;color:#e6e6e6">信立泰</div>
<div class="mk" style="left:210.5px;top:379px">R</div>
<div class="n" style="left:156px;top:369px;color:#ff3c3c">1.70</div>
<div class="n" style="left:232px;top:369px;color:#ff3c3c">26.95</div>
<div class="n" style="left:298px;top:369px;color:#ff3c3c">0.45</div>
<div class="n" style="left:375px;top:369px;color:#ff3c3c">26.94</div>
<div class="n" style="left:451px;top:369px;color:#ff3c3c">26.95</div>
<div class="n" style="left:517px;top:369px;color:#d0d000">38309</div>
<div class="n" style="left:1175px;top:369px;color:#10dcf0">1.02亿</div>
<div class="n" style="left:1233px;top:369px;color:#00e600">0.98</div>
<div class="n" style="left:1465px;top:369px;color:#e6e6e6">3.02</div>
<div class="n" style="left:1540px;top:369px;color:#ff3c3c">26.69</div>
<div class="n" style="left:1646px;top:369px;color:#ff3c3c">20911</div>
<div class="n" style="left:1715px;top:369px;color:#ff3c3c">0.83</div>
<div class="n" style="left:1782px;top:369px;color:#d0d000">3</div>
<div class="l z" style="left:1364px;top:369px;color:#e6e6e6">化学制药</div>
<div class="l z" style="left:1462px;top:369px;color:#e6e6e6">深圳</div>
<div class="a" style="left:1669px;top:369px;width:33px;height:23px;overflow:hidden"><div class="n" style="left:-89px;top:0;color:#00e600">7398</div></div>
<div class="l" style="left:2px;width:40px;text-align:center;top:392px;color:#e6e6e6">15</div>
<div class="l" style="left:52px;top:392px;color:#e6e6e6">000913</div>
<div class="l z" style="left:117px;top:392px;color:#e6e6e6">钱江摩托</div>
<div class="mk" style="left:210.5px;top:402px">R</div>
<div class="n" style="left:156px;top:392px;color:#ff3c3c">1.64</div>
<div class="n" style="left:232px;top:392px;color:#ff3c3c">14.87</div>
<div class="n" style="left:298px;top:392px;color:#ff3c3c">0.24</div>
<div class="n" style="left:375px;top:392px;color:#ff3c3c">14.86</div>
<div class="n" style="left:451px;top:392px;color:#ff3c3c">14.87</div>
<div class="n" style="left:517px;top:392px;color:#d0d000">89764</div>
<div class="n" style="left:1175px;top:392px;color:#10dcf0">1.34亿</div>
<div class="n" style="left:1233px;top:392px;color:#ff3c3c">1.24</div>
<div class="n" style="left:1465px;top:392px;color:#e6e6e6">3.83</div>
<div class="n" style="left:1540px;top:392px;color:#ff3c3c">14.88</div>
<div class="n" style="left:1646px;top:392px;color:#ff3c3c">43843</div>
<div class="n" style="left:1715px;top:392px;color:#00e600">1.05</div>
<div class="n" style="left:1782px;top:392px;color:#d0d000">4</div>
<div class="l z" style="left:1364px;top:392px;color:#e6e6e6">摩托车</div>
<div class="l z" style="left:1462px;top:392px;color:#e6e6e6">浙江</div>
<div class="a" style="left:1669px;top:392px;width:33px;height:23px;overflow:hidden"><div class="n" style="left:-89px;top:0;color:#00e600">5921</div></div>
<div class="l" style="left:2px;width:40px;text-align:center;top:415px;color:#e6e6e6">16</div>
<div class="l" style="left:52px;top:415px;color:#e6e6e6">688498</div>
<div class="l z" style="left:117px;top:415px;color:#e6e6e6">源杰科技</div>
<div class="mk" style="left:210.5px;top:425px">K</div>
<div class="n" style="left:156px;top:415px;color:#ff3c3c">1.60</div>
<div class="n" style="left:232px;top:415px;color:#ff3c3c">171.25</div>
<div class="n" style="left:298px;top:415px;color:#ff3c3c">2.69</div>
<div class="n" style="left:375px;top:415px;color:#ff3c3c">171.15</div>
<div class="n" style="left:451px;top:415px;color:#ff3c3c">171.25</div>
<div class="n" style="left:517px;top:415px;color:#d0d000">37452</div>
<div class="n" style="left:1175px;top:415px;color:#10dcf0">6.45亿</div>
<div class="n" style="left:1233px;top:415px;color:#ff3c3c">1.69</div>
<div class="n" style="left:1465px;top:415px;color:#e6e6e6">5.11</div>
<div class="n" style="left:1540px;top:415px;color:#ff3c3c">172.22</div>
<div class="n" style="left:1646px;top:415px;color:#ff3c3c">19041</div>
<div class="n" style="left:1715px;top:415px;color:#ff3c3c">0.97</div>
<div class="n" style="left:1782px;top:415px;color:#d0d000">2</div>
<div class="l z" style="left:1364px;top:415px;color:#e6e6e6">半导体</div>
<div class="l z" style="left:1462px;top:415px;color:#e6e6e6">陕西</div>
<div class="a" style="left:1669px;top:415px;width:33px;height:23px;overflow:hidden"><div class="n" style="left:-89px;top:0;color:#00e600">3411</div></div>
<div class="l" style="left:2px;width:40px;text-align:center;top:438px;color:#e6e6e6">17</div>
<div class="l" style="left:52px;top:438px;color:#e6e6e6">601669</div>
<div class="l z" style="left:117px;top:438px;color:#e6e6e6">中国电建</div>
<div class="mk" style="left:210.5px;top:448px">R</div>
<div class="n" style="left:156px;top:438px;color:#ff3c3c">1.56</div>
<div class="n" style="left:232px;top:438px;color:#ff3c3c">5.21</div>
<div class="n" style="left:298px;top:438px;color:#ff3c3c">0.08</div>
<div class="n" style="left:375px;top:438px;color:#ff3c3c">5.21</div>
<div class="n" style="left:451px;top:438px;color:#ff3c3c">5.22</div>
<div class="n" style="left:517px;top:438px;color:#d0d000">133.4万</div>
<div class="n" style="left:585px;top:438px;color:#00e600">200</div>
<div class="n" style="left:1175px;top:438px;color:#10dcf0">6.96亿</div>
<div class="n" style="left:1233px;top:438px;color:#ff3c3c">1.86</div>
<div class="n" style="left:1465px;top:438px;color:#e6e6e6">3.12</div>
<div class="n" style="left:1540px;top:438px;color:#ff3c3c">5.22</div>
<div class="n" style="left:1646px;top:438px;color:#ff3c3c">767034</div>
<div class="n" style="left:1715px;top:438px;color:#ff3c3c">0.74</div>
<div class="n" style="left:1782px;top:438px;color:#d0d000">13605</div>
<div class="l z" style="left:1364px;top:438px;color:#e6e6e6">建筑工程</div>
<div class="l z" style="left:1462px;top:438px;color:#e6e6e6">北京</div>
<div class="a" style="left:1669px;top:438px;width:33px;height:23px;overflow:hidden"><div class="n" style="left:-89px;top:0;color:#00e600">5656</div></div>
<div class="l" style="left:2px;width:40px;text-align:center;top:461px;color:#e6e6e6">18</div>
<div class="l" style="left:52px;top:461px;color:#e6e6e6">600874</div>
<div class="l z" style="left:117px;top:461px;color:#e6e6e6">创业环保</div>
<div class="mk" style="left:210.5px;top:471px">R</div>
<div class="n" style="left:156px;top:461px;color:#ff3c3c">1.53</div>
<div class="n" style="left:232px;top:461px;color:#ff3c3c">5.96</div>
<div class="n" style="left:298px;top:461px;color:#ff3c3c">0.09</div>
<div class="n" style="left:375px;top:461px;color:#ff3c3c">5.96</div>
<div class="n" style="left:451px;top:461px;color:#ff3c3c">5.97</div>
<div class="n" style="left:517px;top:461px;color:#d0d000">107102</div>
<div class="n" style="left:1175px;top:461px;color:#10dcf0">6358万</div>
<div class="n" style="left:1233px;top:461px;color:#ff3c3c">1.37</div>
<div class="n" style="left:1465px;top:461px;color:#e6e6e6">2.39</div>
<div class="n" style="left:1540px;top:461px;color:#ff3c3c">5.94</div>
<div class="n" style="left:1646px;top:461px;color:#ff3c3c">59465</div>
<div class="n" style="left:1715px;top:461px;color:#ff3c3c">0.80</div>
<div class="n" style="left:1782px;top:461px;color:#d0d000">7</div>
<div class="l z" style="left:1364px;top:461px;color:#e6e6e6">环境保护</div>
<div class="l z" style="left:1462px;top:461px;color:#e6e6e6">天津</div>
<div class="a" style="left:1669px;top:461px;width:33px;height:23px;overflow:hidden"><div class="n" style="left:-89px;top:0;color:#00e600">7637</div></div>
<div class="l" style="left:2px;width:40px;text-align:center;top:484px;color:#e6e6e6">19</div>
<div class="l" style="left:52px;top:484px;color:#e6e6e6">300450</div>
<div class="l z" style="left:117px;top:484px;color:#e6e6e6">先导智能</div>
<div class="mk" style="left:210.5px;top:494px">R</div>
<div class="n" style="left:156px;top:484px;color:#ff3c3c">1.37</div>
<div class="n" style="left:232px;top:484px;color:#ff3c3c">28.95</div>
<div class="n" style="left:298px;top:484px;color:#ff3c3c">0.39</div>
<div class="n" style="left:375px;top:484px;color:#ff3c3c">28.94</div>
<div class="n" style="left:451px;top:484px;color:#ff3c3c">28.95</div>
<div class="n" style="left:517px;top:484px;color:#d0d000">126499</div>
<div class="n" style="left:1175px;top:484px;color:#10dcf0">3.65亿</div>
<div class="n" style="left:1233px;top:484px;color:#00e600">0.83</div>
<div class="n" style="left:1465px;top:484px;color:#e6e6e6">2.84</div>
<div class="n" style="left:1540px;top:484px;color:#ff3c3c">28.84</div>
<div class="n" style="left:1646px;top:484px;color:#ff3c3c">68278</div>
<div class="n" style="left:1715px;top:484px;color:#ff3c3c">0.85</div>
<div class="n" style="left:1782px;top:484px;color:#d0d000">151</div>
<div class="l z" style="left:1364px;top:484px;color:#e6e6e6">专用机械</div>
<div class="l z" style="left:1462px;top:484px;color:#e6e6e6">江苏</div>
<div class="a" style="left:1669px;top:484px;width:33px;height:23px;overflow:hidden"><div class="n" style="left:-89px;top:0;color:#00e600">3221</div></div>
<div class="l" style="left:2px;width:40px;text-align:center;top:507px;color:#e6e6e6">20</div>
<div class="l" style="left:52px;top:507px;color:#e6e6e6">000785</div>
<div class="l z" style="left:117px;top:507px;color:#e6e6e6">居然之家</div>
<div class="n" style="left:156px;top:507px;color:#ff3c3c">1.36</div>
<div class="n" style="left:232px;top:507px;color:#ff3c3c">3.73</div>
<div class="n" style="left:298px;top:507px;color:#ff3c3c">0.05</div>
<div class="n" style="left:375px;top:507px;color:#ff3c3c">3.73</div>
<div class="n" style="left:451px;top:507px;color:#ff3c3c">3.74</div>
<div class="n" style="left:517px;top:507px;color:#d0d000">208413</div>
<div class="n" style="left:585px;top:507px;color:#00e600">100</div>
<div class="n" style="left:1175px;top:507px;color:#10dcf0">7758万</div>
<div class="n" style="left:1233px;top:507px;color:#00e600">0.72</div>
<div class="n" style="left:1465px;top:507px;color:#e6e6e6">2.17</div>
<div class="n" style="left:1540px;top:507px;color:#ff3c3c">3.72</div>
<div class="n" style="left:1646px;top:507px;color:#ff3c3c">121244</div>
<div class="n" style="left:1715px;top:507px;color:#ff3c3c">0.72</div>
<div class="n" style="left:1782px;top:507px;color:#d0d000">1737</div>
<div class="l z" style="left:1364px;top:507px;color:#e6e6e6">百货</div>
<div class="l z" style="left:1462px;top:507px;color:#e6e6e6">湖北</div>
<div class="a" style="left:1669px;top:507px;width:33px;height:23px;overflow:hidden"><div class="n" style="left:-89px;top:0;color:#00e600">7169</div></div>
<div class="l" style="left:2px;width:40px;text-align:center;top:530px;color:#e6e6e6">21</div>
<div class="l" style="left:52px;top:530px;color:#e6e6e6">002234</div>
<div class="l z" style="left:117px;top:530px;color:#e6e6e6">民和股份</div>
<div class="mk" style="left:210.5px;top:540px">R</div>
<div class="n" style="left:156px;top:530px;color:#ff3c3c">1.27</div>
<div class="n" style="left:232px;top:530px;color:#ff3c3c">15.12</div>
<div class="n" style="left:298px;top:530px;color:#ff3c3c">0.19</div>
<div class="n" style="left:375px;top:530px;color:#ff3c3c">15.11</div>
<div class="n" style="left:451px;top:530px;color:#ff3c3c">15.12</div>
<div class="n" style="left:517px;top:530px;color:#d0d000">48359</div>
<div class="n" style="left:1175px;top:530px;color:#10dcf0">7306万</div>
<div class="n" style="left:1233px;top:530px;color:#ff3c3c">1.12</div>
<div class="n" style="left:1465px;top:530px;color:#e6e6e6">2.34</div>
<div class="n" style="left:1540px;top:530px;color:#ff3c3c">15.11</div>
<div class="n" style="left:1646px;top:530px;color:#ff3c3c">25158</div>
<div class="n" style="left:1715px;top:530px;color:#ff3c3c">0.92</div>
<div class="n" style="left:1782px;top:530px;color:#d0d000">62</div>
<div class="l z" style="left:1364px;top:530px;color:#e6e6e6">农业综合</div>
<div class="l z" style="left:1462px;top:530px;color:#e6e6e6">山东</div>
<div class="a" style="left:1669px;top:530px;width:33px;height:23px;overflow:hidden"><div class="n" style="left:-89px;top:0;color:#00e600">3201</div></div>
<div class="l" style="left:2px;width:40px;text-align:center;top:553px;color:#e6e6e6">22</div>
<div class="l" style="left:52px;top:553px;color:#e6e6e6">600097</div>
<div class="l z" style="left:117px;top:553px;color:#e6e6e6">开创国际</div>
<div class="n" style="left:156px;top:553px;color:#ff3c3c">1.19</div>
<div class="n" style="left:232px;top:553px;color:#ff3c3c">9.33</div>
<div class="n" style="left:298px;top:553px;color:#ff3c3c">0.11</div>
<div class="n" style="left:375px;top:553px;color:#ff3c3c">9.32</div>
<div class="n" style="left:451px;top:553px;color:#ff3c3c">9.33</div>
<div class="n" style="left:517px;top:553px;color:#d0d000">26506</div>
<div class="n" style="left:585px;top:553px;color:#00e600">100</div>
<div class="n" style="left:1175px;top:553px;color:#10dcf0">2461万</div>
<div class="n" style="left:1233px;top:553px;color:#00e600">0.73</div>
<div class="n" style="left:1465px;top:553px;color:#e6e6e6">1.63</div>
<div class="n" style="left:1540px;top:553px;color:#ff3c3c">9.28</div>
<div class="n" style="left:1646px;top:553px;color:#ff3c3c">15699</div>
<div class="n" style="left:1715px;top:553px;color:#ff3c3c">0.69</div>
<div class="n" style="left:1782px;top:553px;color:#d0d000">77</div>
<div class="l z" style="left:1364px;top:553px;color:#e6e6e6">渔业</div>
<div class="l z" style="left:1462px;top:553px;color:#e6e6e6">上海</div>
<div class="a" style="left:1669px;top:553px;width:33px;height:23px;overflow:hidden"><div class="n" style="left:-89px;top:0;color:#00e600">0807</div></div>
<div class="l" style="left:2px;width:40px;text-align:center;top:576px;color:#e6e6e6">23</div>
<div class="l" style="left:52px;top:576px;color:#e6e6e6">600820</div>
<div class="l z" style="left:117px;top:576px;color:#e6e6e6">隧道股份</div>
<div class="mk" style="left:210.5px;top:586px">R</div>
<div class="n" style="left:156px;top:576px;color:#ff3c3c">1.04</div>
<div class="n" style="left:232px;top:576px;color:#ff3c3c">5.85</div>
<div class="n" style="left:298px;top:576px;color:#ff3c3c">0.06</div>
<div class="n" style="left:375px;top:576px;color:#ff3c3c">5.84</div>
<div class="n" style="left:451px;top:576px;color:#ff3c3c">5.85</div>
<div class="n" style="left:517px;top:576px;color:#d0d000">119712</div>
<div class="n" style="left:585px;top:576px;color:#c040f0">1700</div>
<div class="n" style="left:1175px;top:576px;color:#10dcf0">6985万</div>
<div class="n" style="left:1233px;top:576px;color:#00e600">0.67</div>
<div class="n" style="left:1465px;top:576px;color:#e6e6e6">1.38</div>
<div class="n" style="left:1540px;top:576px;color:#ff3c3c">5.83</div>
<div class="n" style="left:1646px;top:576px;color:#ff3c3c">74366</div>
<div class="n" style="left:1715px;top:576px;color:#ff3c3c">0.61</div>
<div class="n" style="left:1782px;top:576px;color:#d0d000">568</div>
<div class="l z" style="left:1364px;top:576px;color:#e6e6e6">建筑工程</div>
<div class="l z" style="left:1462px;top:576px;color:#e6e6e6">上海</div>
<div class="a" style="left:1669px;top:576px;width:33px;height:23px;overflow:hidden"><div class="n" style="left:-89px;top:0;color:#00e600">5346</div></div>
<div class="l" style="left:2px;width:40px;text-align:center;top:599px;color:#e6e6e6">24</div>
<div class="l" style="left:52px;top:599px;color:#e6e6e6">600905</div>
<div class="l z" style="left:117px;top:599px;color:#e6e6e6">三峡能源</div>
<div class="mk" style="left:210.5px;top:609px">R</div>
<div class="n" style="left:156px;top:599px;color:#ff3c3c">1.03</div>
<div class="n" style="left:232px;top:599px;color:#ff3c3c">4.91</div>
<div class="n" style="left:298px;top:599px;color:#ff3c3c">0.05</div>
<div class="n" style="left:375px;top:599px;color:#ff3c3c">4.90</div>
<div class="n" style="left:451px;top:599px;color:#ff3c3c">4.91</div>
<div class="n" style="left:517px;top:599px;color:#d0d000">651156</div>
<div class="n" style="left:1175px;top:599px;color:#10dcf0">3.19亿</div>
<div class="n" style="left:1233px;top:599px;color:#00e600">0.95</div>
<div class="n" style="left:1465px;top:599px;color:#e6e6e6">1.44</div>
<div class="n" style="left:1540px;top:599px;color:#ff3c3c">4.90</div>
<div class="n" style="left:1646px;top:599px;color:#ff3c3c">418169</div>
<div class="n" style="left:1715px;top:599px;color:#ff3c3c">0.56</div>
<div class="n" style="left:1782px;top:599px;color:#d0d000">81</div>
<div class="l z" style="left:1364px;top:599px;color:#e6e6e6">新型电力</div>
<div class="l z" style="left:1462px;top:599px;color:#e6e6e6">北京</div>
<div class="a" style="left:1669px;top:599px;width:33px;height:23px;overflow:hidden"><div class="n" style="left:-89px;top:0;color:#00e600">2987</div></div>
<div class="l" style="left:2px;width:40px;text-align:center;top:622px;color:#e6e6e6">25</div>
<div class="l" style="left:52px;top:622px;color:#e6e6e6">601330</div>
<div class="l z" style="left:117px;top:622px;color:#e6e6e6">绿色动力</div>
<div class="n" style="left:156px;top:622px;color:#ff3c3c">0.85</div>
<div class="n" style="left:232px;top:622px;color:#ff3c3c">7.11</div>
<div class="n" style="left:298px;top:622px;color:#ff3c3c">0.06</div>
<div class="n" style="left:375px;top:622px;color:#ff3c3c">7.10</div>
<div class="n" style="left:451px;top:622px;color:#ff3c3c">7.11</div>
<div class="n" style="left:517px;top:622px;color:#d0d000">23430</div>
<div class="n" style="left:1175px;top:622px;color:#10dcf0">1663万</div>
<div class="n" style="left:1233px;top:622px;color:#00e600">0.78</div>
<div class="n" style="left:1465px;top:622px;color:#e6e6e6">1.70</div>
<div class="n" style="left:1540px;top:622px;color:#ff3c3c">7.10</div>
<div class="n" style="left:1646px;top:622px;color:#ff3c3c">13532</div>
<div class="n" style="left:1715px;top:622px;color:#ff3c3c">0.73</div>
<div class="n" style="left:1782px;top:622px;color:#d0d000">5</div>
<div class="l z" style="left:1364px;top:622px;color:#e6e6e6">环境保护</div>
<div class="l z" style="left:1462px;top:622px;color:#e6e6e6">深圳</div>
<div class="a" style="left:1669px;top:622px;width:33px;height:23px;overflow:hidden"><div class="n" style="left:-89px;top:0;color:#00e600">9898</div></div>
<div class="l" style="left:2px;width:40px;text-align:center;top:645px;color:#e6e6e6">26</div>
<div class="l" style="left:52px;top:645px;color:#e6e6e6">300827</div>
<div class="l z" style="left:117px;top:645px;color:#e6e6e6">上能电气</div>
<div class="mk" style="left:210.5px;top:655px">R</div>
<div class="n" style="left:156px;top:645px;color:#ff3c3c">0.81</div>
<div class="n" style="left:232px;top:645px;color:#ff3c3c">31.20</div>
<div class="n" style="left:298px;top:645px;color:#ff3c3c">0.25</div>
<div class="n" style="left:375px;top:645px;color:#ff3c3c">31.20</div>
<div class="n" style="left:451px;top:645px;color:#ff3c3c">31.21</div>
<div class="n" style="left:517px;top:645px;color:#d0d000">62728</div>
<div class="n" style="left:1175px;top:645px;color:#10dcf0">1.95亿</div>
<div class="n" style="left:1233px;top:645px;color:#00e600">0.65</div>
<div class="n" style="left:1465px;top:645px;color:#e6e6e6">2.33</div>
<div class="n" style="left:1540px;top:645px;color:#ff3c3c">31.15</div>
<div class="n" style="left:1646px;top:645px;color:#ff3c3c">33440</div>
<div class="n" style="left:1715px;top:645px;color:#ff3c3c">0.88</div>
<div class="n" style="left:1782px;top:645px;color:#d0d000">85</div>
<div class="l z" style="left:1364px;top:645px;color:#e6e6e6">电气设备</div>
<div class="l z" style="left:1462px;top:645px;color:#e6e6e6">江苏</div>
<div class="a" style="left:1669px;top:645px;width:33px;height:23px;overflow:hidden"><div class="n" style="left:-89px;top:0;color:#00e600">9288</div></div>
<div class="l" style="left:2px;width:40px;text-align:center;top:668px;color:#e6e6e6">27</div>
<div class="l" style="left:52px;top:668px;color:#e6e6e6">301167</div>
<div class="l z" style="left:117px;top:668px;color:#e6e6e6">建研设计</div>
<div class="mk" style="left:210.5px;top:678px">Z</div>
<div class="n" style="left:156px;top:668px;color:#ff3c3c">0.75</div>
<div class="n" style="left:232px;top:668px;color:#ff3c3c">17.43</div>
<div class="n" style="left:298px;top:668px;color:#ff3c3c">0.13</div>
<div class="n" style="left:375px;top:668px;color:#ff3c3c">17.41</div>
<div class="n" style="left:451px;top:668px;color:#ff3c3c">17.42</div>
<div class="n" style="left:517px;top:668px;color:#d0d000">17756</div>
<div class="n" style="left:1175px;top:668px;color:#10dcf0">3076万</div>
<div class="n" style="left:1233px;top:668px;color:#00e600">0.76</div>
<div class="n" style="left:1465px;top:668px;color:#e6e6e6">2.02</div>
<div class="n" style="left:1540px;top:668px;color:#ff3c3c">17.32</div>
<div class="n" style="left:1646px;top:668px;color:#ff3c3c">9882</div>
<div class="n" style="left:1715px;top:668px;color:#ff3c3c">0.80</div>
<div class="n" style="left:1782px;top:668px;color:#d0d000">2</div>
<div class="l z" style="left:1364px;top:668px;color:#e6e6e6">建筑工程</div>
<div class="l z" style="left:1462px;top:668px;color:#e6e6e6">安徽</div>
<div class="a" style="left:1669px;top:668px;width:33px;height:23px;overflow:hidden"><div class="n" style="left:-89px;top:0;color:#00e600">7874</div></div>
<div class="l" style="left:2px;width:40px;text-align:center;top:691px;color:#e6e6e6">28</div>
<div class="l" style="left:52px;top:691px;color:#e6e6e6">000977</div>
<div class="l z" style="left:117px;top:691px;color:#e6e6e6">浪潮信息</div>
<div class="mk" style="left:210.5px;top:701px">R</div>
<div class="n" style="left:156px;top:691px;color:#ff3c3c">0.71</div>
<div class="n" style="left:232px;top:691px;color:#ff3c3c">38.26</div>
<div class="n" style="left:298px;top:691px;color:#ff3c3c">0.27</div>
<div class="n" style="left:375px;top:691px;color:#ff3c3c">38.25</div>
<div class="n" style="left:451px;top:691px;color:#ff3c3c">38.26</div>
<div class="n" style="left:517px;top:691px;color:#d0d000">117.7万</div>
<div class="n" style="left:585px;top:691px;color:#ff3c3c">400</div>
<div class="n" style="left:1175px;top:691px;color:#10dcf0">45.2亿</div>
<div class="n" style="left:1233px;top:691px;color:#ff3c3c">1.58</div>
<div class="n" style="left:1465px;top:691px;color:#e6e6e6">4.47</div>
<div class="n" style="left:1540px;top:691px;color:#ff3c3c">38.42</div>
<div class="n" style="left:1646px;top:691px;color:#ff3c3c">585352</div>
<div class="n" style="left:1715px;top:691px;color:#00e600">1.01</div>
<div class="n" style="left:1782px;top:691px;color:#d0d000">162</div>
<div class="l z" style="left:1364px;top:691px;color:#e6e6e6">IT设备</div>
<div class="l z" style="left:1462px;top:691px;color:#e6e6e6">山东</div>
<div class="a" style="left:1669px;top:691px;width:33px;height:23px;overflow:hidden"><div class="n" style="left:-89px;top:0;color:#00e600">1596</div></div>
<div class="l" style="left:2px;width:40px;text-align:center;top:714px;color:#e6e6e6">29</div>
<div class="l" style="left:52px;top:714px;color:#e6e6e6">603363</div>
<div class="l z" style="left:117px;top:714px;color:#e6e6e6">傲农生物</div>
<div class="mk" style="left:210.5px;top:724px">R</div>
<div class="n" style="left:156px;top:714px;color:#ff3c3c">0.70</div>
<div class="n" style="left:232px;top:714px;color:#ff3c3c">8.64</div>
<div class="n" style="left:298px;top:714px;color:#ff3c3c">0.06</div>
<div class="n" style="left:375px;top:714px;color:#ff3c3c">8.64</div>
<div class="n" style="left:451px;top:714px;color:#ff3c3c">8.65</div>
<div class="n" style="left:517px;top:714px;color:#d0d000">83940</div>
<div class="n" style="left:1175px;top:714px;color:#10dcf0">7264万</div>
<div class="n" style="left:1233px;top:714px;color:#ff3c3c">1.28</div>
<div class="n" style="left:1465px;top:714px;color:#e6e6e6">2.21</div>
<div class="n" style="left:1540px;top:714px;color:#ff3c3c">8.65</div>
<div class="n" style="left:1646px;top:714px;color:#ff3c3c">41215</div>
<div class="n" style="left:1715px;top:714px;color:#00e600">1.04</div>
<div class="n" style="left:1782px;top:714px;color:#d0d000">1309</div>
<div class="l z" style="left:1364px;top:714px;color:#e6e6e6">饲料</div>
<div class="l z" style="left:1462px;top:714px;color:#e6e6e6">福建</div>
<div class="a" style="left:1669px;top:714px;width:33px;height:23px;overflow:hidden"><div class="n" style="left:-89px;top:0;color:#00e600">2725</div></div>
<div class="l" style="left:2px;width:40px;text-align:center;top:737px;color:#e6e6e6">30</div>
<div class="l" style="left:52px;top:737px;color:#e6e6e6">688261</div>
<div class="l z" style="left:117px;top:737px;color:#e6e6e6">东微半导</div>
<div class="mk" style="left:210.5px;top:747px">K</div>
<div class="n" style="left:156px;top:737px;color:#ff3c3c">0.69</div>
<div class="n" style="left:232px;top:737px;color:#ff3c3c">99.90</div>
<div class="n" style="left:298px;top:737px;color:#ff3c3c">0.68</div>
<div class="n" style="left:375px;top:737px;color:#ff3c3c">99.81</div>
<div class="n" style="left:451px;top:737px;color:#ff3c3c">99.90</div>
<div class="n" style="left:517px;top:737px;color:#d0d000">7721</div>
<div class="n" style="left:585px;top:737px;color:#ff3c3c">7</div>
<div class="n" style="left:643px;top:737px;color:#00e600">-0.03</div>
<div class="n" style="left:710px;top:737px;color:#e6e6e6">1.32</div>
<div class="n" style="left:786px;top:737px;color:#00e600">98.33</div>
<div class="n" style="left:862px;top:737px;color:#ff3c3c">100.38</div>
<div class="n" style="left:938px;top:737px;color:#00e600">98.00</div>
<div class="n" style="left:1014px;top:737px;color:#e6e6e6">99.22</div>
<div class="n" style="left:1099px;top:737px;color:#e6e6e6">47.05</div>
<div class="n" style="left:1175px;top:737px;color:#10dcf0">7672万</div>
<div class="n" style="left:1233px;top:737px;color:#00e600">0.69</div>
<div class="n" style="left:1465px;top:737px;color:#e6e6e6">2.40</div>
<div class="n" style="left:1540px;top:737px;color:#ff3c3c">99.37</div>
<div class="n" style="left:1646px;top:737px;color:#ff3c3c">4156</div>
<div class="n" style="left:1715px;top:737px;color:#ff3c3c">0.86</div>
<div class="n" style="left:1782px;top:737px;color:#d0d000">8</div>
<div class="l z" style="left:1364px;top:737px;color:#e6e6e6">半导体</div>
<div class="l z" style="left:1462px;top:737px;color:#e6e6e6">江苏</div>
<div class="a" style="left:1669px;top:737px;width:33px;height:23px;overflow:hidden"><div class="n" style="left:-89px;top:0;color:#00e600">3565</div></div>
<div class="l" style="left:2px;width:40px;text-align:center;top:760px;color:#e6e6e6">31</div>
<div class="l" style="left:52px;top:760px;color:#e6e6e6">603768</div>
<div class="l z" style="left:117px;top:760px;color:#e6e6e6">常青股份</div>
<div class="n" style="left:156px;top:760px;color:#ff3c3c">0.66</div>
<div class="n" style="left:232px;top:760px;color:#ff3c3c">15.16</div>
<div class="n" style="left:298px;top:760px;color:#ff3c3c">0.10</div>
<div class="n" style="left:375px;top:760px;color:#ff3c3c">15.15</div>
<div class="n" style="left:451px;top:760px;color:#ff3c3c">15.16</div>
<div class="n" style="left:517px;top:760px;color:#d0d000">41592</div>
<div class="n" style="left:585px;top:760px;color:#ff3c3c">2</div>
<div class="n" style="left:643px;top:760px;color:#00e600">-0.25</div>
<div class="n" style="left:710px;top:760px;color:#e6e6e6">2.04</div>
<div class="n" style="left:786px;top:760px;color:#ff3c3c">15.14</div>
<div class="n" style="left:862px;top:760px;color:#ff3c3c">15.52</div>
<div class="n" style="left:938px;top:760px;color:#ff3c3c">15.07</div>
<div class="n" style="left:1014px;top:760px;color:#e6e6e6">15.06</div>
<div class="n" style="left:1099px;top:760px;color:#e6e6e6">17.13</div>
<div class="n" style="left:1175px;top:760px;color:#10dcf0">6355万</div>
<div class="n" style="left:1233px;top:760px;color:#ff3c3c">1.18</div>
<div class="n" style="left:1465px;top:760px;color:#e6e6e6">2.99</div>
<div class="n" style="left:1540px;top:760px;color:#ff3c3c">15.28</div>
<div class="n" style="left:1646px;top:760px;color:#ff3c3c">20516</div>
<div class="n" style="left:1715px;top:760px;color:#00e600">1.03</div>
<div class="n" style="left:1782px;top:760px;color:#d0d000">19</div>
<div class="l z" style="left:1364px;top:760px;color:#e6e6e6">汽车配件</div>
<div class="l z" style="left:1462px;top:760px;color:#e6e6e6">安徽</div>
<div class="a" style="left:1669px;top:760px;width:33px;height:23px;overflow:hidden"><div class="n" style="left:-89px;top:0;color:#00e600">1076</div></div>
<div class="l" style="left:2px;width:40px;text-align:center;top:783px;color:#e6e6e6">32</div>
<div class="l" style="left:52px;top:783px;color:#e6e6e6">600769</div>
<div class="l z" style="left:117px;top:783px;color:#e6e6e6">祥龙电业</div>
<div class="n" style="left:156px;top:783px;color:#ff3c3c">0.63</div>
<div class="n" style="left:232px;top:783px;color:#ff3c3c">7.99</div>
<div class="n" style="left:298px;top:783px;color:#ff3c3c">0.05</div>
<div class="n" style="left:375px;top:783px;color:#ff3c3c">7.98</div>
<div class="n" style="left:451px;top:783px;color:#ff3c3c">7.99</div>
<div class="n" style="left:517px;top:783px;color:#d0d000">31980</div>
<div class="n" style="left:585px;top:783px;color:#ff3c3c">10</div>
<div class="n" style="left:643px;top:783px;color:#ff3c3c">0.13</div>
<div class="n" style="left:710px;top:783px;color:#e6e6e6">0.85</div>
<div class="n" style="left:786px;top:783px;color:#e6e6e6">7.94</div>
<div class="n" style="left:862px;top:783px;color:#ff3c3c">8.09</div>
<div class="n" style="left:938px;top:783px;color:#00e600">7.88</div>
<div class="n" style="left:1014px;top:783px;color:#e6e6e6">7.94</div>
<div class="n" style="left:1099px;top:783px;color:#e6e6e6">224.69</div>
<div class="n" style="left:1175px;top:783px;color:#10dcf0">2566万</div>
<div class="n" style="left:1233px;top:783px;color:#00e600">0.90</div>
<div class="n" style="left:1465px;top:783px;color:#e6e6e6">2.64</div>
<div class="n" style="left:1540px;top:783px;color:#ff3c3c">8.02</div>
<div class="n" style="left:1646px;top:783px;color:#ff3c3c">17126</div>
<div class="n" style="left:1715px;top:783px;color:#ff3c3c">0.87</div>
<div class="n" style="left:1782px;top:783px;color:#d0d000">413</div>
<div class="l z" style="left:1364px;top:783px;color:#e6e6e6">建筑工程</div>
<div class="l z" style="left:1462px;top:783px;color:#e6e6e6">湖北</div>
<div class="a" style="left:1669px;top:783px;width:33px;height:23px;overflow:hidden"><div class="n" style="left:-89px;top:0;color:#00e600">4854</div></div>
<div class="l" style="left:2px;width:40px;text-align:center;top:806px;color:#e6e6e6">33</div>
<div class="l" style="left:52px;top:806px;color:#e6e6e6">002041</div>
<div class="l z" style="left:117px;top:806px;color:#e6e6e6">登海种业</div>
<div class="mk" style="left:210.5px;top:816px">R</div>
<div class="n" style="left:156px;top:806px;color:#ff3c3c">0.61</div>
<div class="n" style="left:232px;top:806px;color:#ff3c3c">14.80</div>
<div class="n" style="left:298px;top:806px;color:#ff3c3c">0.09</div>
<div class="n" style="left:375px;top:806px;color:#ff3c3c">14.79</div>
<div class="n" style="left:451px;top:806px;color:#ff3c3c">14.80</div>
<div class="n" style="left:517px;top:806px;color:#d0d000">27934</div>
<div class="n" style="left:585px;top:806px;color:#ff3c3c">50</div>
<div class="n" style="left:643px;top:806px;color:#00e600">-0.06</div>
<div class="n" style="left:710px;top:806px;color:#e6e6e6">0.32</div>
<div class="n" style="left:786px;top:806px;color:#e6e6e6">14.71</div>
<div class="n" style="left:862px;top:806px;color:#ff3c3c">14.89</div>
<div class="n" style="left:938px;top:806px;color:#00e600">14.65</div>
<div class="n" style="left:1014px;top:806px;color:#e6e6e6">14.71</div>
<div class="n" style="left:1099px;top:806px;color:#e6e6e6">87.32</div>
<div class="n" style="left:1175px;top:806px;color:#10dcf0">4131万</div>
<div class="n" style="left:1233px;top:806px;color:#00e600">0.78</div>
<div class="n" style="left:1465px;top:806px;color:#e6e6e6">1.63</div>
<div class="n" style="left:1540px;top:806px;color:#ff3c3c">14.79</div>
<div class="n" style="left:1646px;top:806px;color:#ff3c3c">14701</div>
<div class="n" style="left:1715px;top:806px;color:#ff3c3c">0.90</div>
<div class="n" style="left:1782px;top:806px;color:#d0d000">27</div>
<div class="l z" style="left:1364px;top:806px;color:#e6e6e6">种植业</div>
<div class="l z" style="left:1462px;top:806px;color:#e6e6e6">山东</div>
<div class="a" style="left:1669px;top:806px;width:33px;height:23px;overflow:hidden"><div class="n" style="left:-89px;top:0;color:#00e600">3233</div></div>
<div class="l" style="left:2px;width:40px;text-align:center;top:829px;color:#e6e6e6">34</div>
<div class="l" style="left:52px;top:829px;color:#e6e6e6">300502</div>
<div class="l z" style="left:117px;top:829px;color:#e6e6e6">新易盛</div>
<div class="mk" style="left:210.5px;top:839px">R</div>
<div class="n" style="left:156px;top:829px;color:#ff3c3c">0.59</div>
<div class="n" style="left:232px;top:829px;color:#ff3c3c">44.28</div>
<div class="n" style="left:298px;top:829px;color:#ff3c3c">0.26</div>
<div class="n" style="left:375px;top:829px;color:#ff3c3c">44.28</div>
<div class="n" style="left:451px;top:829px;color:#ff3c3c">44.29</div>
<div class="n" style="left:517px;top:829px;color:#d0d000">477143</div>
<div class="n" style="left:585px;top:829px;color:#00e600">40</div>
<div class="n" style="left:643px;top:829px;color:#00e600">-0.01</div>
<div class="n" style="left:710px;top:829px;color:#e6e6e6">7.73</div>
<div class="n" style="left:786px;top:829px;color:#00e600">43.54</div>
<div class="n" style="left:862px;top:829px;color:#ff3c3c">45.80</div>
<div class="n" style="left:938px;top:829px;color:#00e600">43.40</div>
<div class="n" style="left:1014px;top:829px;color:#e6e6e6">44.02</div>
<div class="n" style="left:1099px;top:829px;color:#e6e6e6">54.51</div>
<div class="n" style="left:1175px;top:829px;color:#10dcf0">21.3亿</div>
<div class="n" style="left:1233px;top:829px;color:#ff3c3c">1.58</div>
<div class="n" style="left:1465px;top:829px;color:#e6e6e6">5.45</div>
<div class="n" style="left:1540px;top:829px;color:#ff3c3c">44.70</div>
<div class="n" style="left:1646px;top:829px;color:#ff3c3c">245759</div>
<div class="n" style="left:1715px;top:829px;color:#ff3c3c">0.94</div>
<div class="n" style="left:1782px;top:829px;color:#d0d000">70</div>
<div class="l z" style="left:1364px;top:829px;color:#e6e6e6">通信设备</div>
<div class="l z" style="left:1462px;top:829px;color:#e6e6e6">四川</div>
<div class="a" style="left:1669px;top:829px;width:33px;height:23px;overflow:hidden"><div class="n" style="left:-89px;top:0;color:#00e600">1384</div></div>
<div class="l" style="left:2px;width:40px;text-align:center;top:852px;color:#e6e6e6">35</div>
<div class="l" style="left:52px;top:852px;color:#e6e6e6">688266</div>
<div class="l z" style="left:117px;top:852px;color:#e6e6e6">泽璟制药-U</div>
<div class="mk" style="left:210.5px;top:862px">K</div>
<div class="n" style="left:156px;top:852px;color:#ff3c3c">0.54</div>
<div class="n" style="left:232px;top:852px;color:#ff3c3c">43.21</div>
<div class="n" style="left:298px;top:852px;color:#ff3c3c">0.23</div>
<div class="n" style="left:375px;top:852px;color:#ff3c3c">43.22</div>
<div class="n" style="left:451px;top:852px;color:#ff3c3c">43.26</div>
<div class="n" style="left:517px;top:852px;color:#d0d000">26648</div>
<div class="n" style="left:585px;top:852px;color:#00e600">6</div>
<div class="n" style="left:643px;top:852px;color:#00e600">-0.08</div>
<div class="n" style="left:710px;top:852px;color:#e6e6e6">1.86</div>
<div class="n" style="left:786px;top:852px;color:#ff3c3c">43.05</div>
<div class="n" style="left:862px;top:852px;color:#ff3c3c">43.78</div>
<div class="n" style="left:938px;top:852px;color:#00e600">42.41</div>
<div class="n" style="left:1014px;top:852px;color:#e6e6e6">42.98</div>
<div class="n" style="left:1091px;top:852px;color:#e6e6e6">--</div>
<div class="n" style="left:1175px;top:852px;color:#10dcf0">1.15亿</div>
<div class="n" style="left:1233px;top:852px;color:#ff3c3c">1.05</div>
<div class="n" style="left:1465px;top:852px;color:#e6e6e6">3.19</div>
<div class="n" style="left:1540px;top:852px;color:#ff3c3c">43.16</div>
<div class="n" style="left:1646px;top:852px;color:#ff3c3c">12709</div>
<div class="n" style="left:1715px;top:852px;color:#00e600">1.10</div>
<div class="n" style="left:1782px;top:852px;color:#d0d000">3</div>
<div class="l z" style="left:1364px;top:852px;color:#e6e6e6">生物制药</div>
<div class="l z" style="left:1462px;top:852px;color:#e6e6e6">江苏</div>
<div class="a" style="left:1669px;top:852px;width:33px;height:23px;overflow:hidden"><div class="n" style="left:-89px;top:0;color:#00e600">3939</div></div>
<div class="l" style="left:2px;width:40px;text-align:center;top:875px;color:#e6e6e6">36</div>
<div class="l" style="left:52px;top:875px;color:#e6e6e6">002085</div>
<div class="l z" style="left:117px;top:875px;color:#e6e6e6">万丰奥威</div>
<div class="mk" style="left:210.5px;top:885px">R</div>
<div class="n" style="left:156px;top:875px;color:#ff3c3c">0.53</div>
<div class="n" style="left:232px;top:875px;color:#ff3c3c">5.69</div>
<div class="n" style="left:298px;top:875px;color:#ff3c3c">0.03</div>
<div class="n" style="left:375px;top:875px;color:#ff3c3c">5.69</div>
<div class="n" style="left:451px;top:875px;color:#ff3c3c">5.70</div>
<div class="n" style="left:517px;top:875px;color:#d0d000">190406</div>
<div class="n" style="left:585px;top:875px;color:#00e600">42</div>
<div class="n" style="left:643px;top:875px;color:#00e600">-0.17</div>
<div class="n" style="left:710px;top:875px;color:#e6e6e6">0.89</div>
<div class="n" style="left:786px;top:875px;color:#e6e6e6">5.66</div>
<div class="n" style="left:862px;top:875px;color:#ff3c3c">5.74</div>
<div class="n" style="left:938px;top:875px;color:#00e600">5.60</div>
<div class="n" style="left:1014px;top:875px;color:#e6e6e6">5.66</div>
<div class="n" style="left:1099px;top:875px;color:#e6e6e6">19.12</div>
<div class="n" style="left:1175px;top:875px;color:#10dcf0">1.08亿</div>
<div class="n" style="left:1233px;top:875px;color:#ff3c3c">1.14</div>
<div class="n" style="left:1465px;top:875px;color:#e6e6e6">2.47</div>
<div class="n" style="left:1540px;top:875px;color:#ff3c3c">5.69</div>
<div class="n" style="left:1646px;top:875px;color:#ff3c3c">109365</div>
<div class="n" style="left:1715px;top:875px;color:#ff3c3c">0.74</div>
<div class="n" style="left:1782px;top:875px;color:#d0d000">744</div>
<div class="l z" style="left:1364px;top:875px;color:#e6e6e6">汽车配件</div>
<div class="l z" style="left:1462px;top:875px;color:#e6e6e6">浙江</div>
<div class="a" style="left:1669px;top:875px;width:33px;height:23px;overflow:hidden"><div class="n" style="left:-89px;top:0;color:#00e600">1041</div></div>
<div class="l" style="left:2px;width:40px;text-align:center;top:898px;color:#e6e6e6">37</div>
<div class="l" style="left:52px;top:898px;color:#e6e6e6">000036</div>
<div class="l z" style="left:117px;top:898px;color:#e6e6e6">华联控股</div>
<div class="mk" style="left:210.5px;top:908px">R</div>
<div class="n" style="left:156px;top:898px;color:#ff3c3c">0.51</div>
<div class="n" style="left:232px;top:898px;color:#ff3c3c">3.92</div>
<div class="n" style="left:298px;top:898px;color:#ff3c3c">0.02</div>
<div class="n" style="left:375px;top:898px;color:#ff3c3c">3.91</div>
<div class="n" style="left:451px;top:898px;color:#ff3c3c">3.92</div>
<div class="n" style="left:517px;top:898px;color:#d0d000">54761</div>
<div class="n" style="left:585px;top:898px;color:#ff3c3c">7</div>
<div class="n" style="left:643px;top:898px;color:#ff3c3c">0.26</div>
<div class="n" style="left:710px;top:898px;color:#e6e6e6">0.37</div>
<div class="n" style="left:786px;top:898px;color:#ff3c3c">3.95</div>
<div class="n" style="left:862px;top:898px;color:#ff3c3c">3.95</div>
<div class="n" style="left:938px;top:898px;color:#00e600">3.88</div>
<div class="n" style="left:1014px;top:898px;color:#e6e6e6">3.90</div>
<div class="n" style="left:1099px;top:898px;color:#e6e6e6">107.85</div>
<div class="n" style="left:1175px;top:898px;color:#10dcf0">2140万</div>
<div class="n" style="left:1233px;top:898px;color:#00e600">0.44</div>
<div class="n" style="left:1465px;top:898px;color:#e6e6e6">1.79</div>
<div class="n" style="left:1540px;top:898px;color:#ff3c3c">3.91</div>
<div class="n" style="left:1646px;top:898px;color:#ff3c3c">26841</div>
<div class="n" style="left:1715px;top:898px;color:#00e600">1.04</div>
<div class="n" style="left:1782px;top:898px;color:#d0d000">1807</div>
<div class="l z" style="left:1364px;top:898px;color:#e6e6e6">全国地产</div>
<div class="l z" style="left:1462px;top:898px;color:#e6e6e6">深圳</div>
<div class="a" style="left:1669px;top:898px;width:33px;height:23px;overflow:hidden"><div class="n" style="left:-89px;top:0;color:#00e600">7920</div></div>
<div class="l" style="left:2px;width:40px;text-align:center;top:921px;color:#e6e6e6">38</div>
<div class="l" style="left:52px;top:921px;color:#e6e6e6">300237</div>
<div class="l z" style="left:117px;top:921px;color:#e6e6e6">美晨生态</div>
<div class="mk" style="left:210.5px;top:931px">R</div>
<div class="n" style="left:156px;top:921px;color:#ff3c3c">0.51</div>
<div class="n" style="left:232px;top:921px;color:#ff3c3c">1.98</div>
<div class="n" style="left:298px;top:921px;color:#ff3c3c">0.01</div>
<div class="n" style="left:375px;top:921px;color:#ff3c3c">1.98</div>
<div class="n" style="left:451px;top:921px;color:#ff3c3c">1.99</div>
<div class="n" style="left:517px;top:921px;color:#d0d000">189612</div>
<div class="n" style="left:585px;top:921px;color:#00e600">152</div>
<div class="n" style="left:643px;top:921px;color:#e6e6e6">0.00</div>
<div class="n" style="left:710px;top:921px;color:#e6e6e6">1.32</div>
<div class="n" style="left:786px;top:921px;color:#e6e6e6">1.97</div>
<div class="n" style="left:862px;top:921px;color:#ff3c3c">2.00</div>
<div class="n" style="left:938px;top:921px;color:#00e600">1.96</div>
<div class="n" style="left:1014px;top:921px;color:#e6e6e6">1.97</div>
<div class="n" style="left:1091px;top:921px;color:#e6e6e6">--</div>
<div class="n" style="left:1175px;top:921px;color:#10dcf0">3758万</div>
<div class="n" style="left:1233px;top:921px;color:#ff3c3c">1.01</div>
<div class="n" style="left:1465px;top:921px;color:#e6e6e6">2.03</div>
<div class="n" style="left:1540px;top:921px;color:#ff3c3c">1.98</div>
<div class="n" style="left:1646px;top:921px;color:#ff3c3c">99429</div>
<div class="n" style="left:1715px;top:921px;color:#ff3c3c">0.91</div>
<div class="n" style="left:1782px;top:921px;color:#d0d000">4941</div>
<div class="l z" style="left:1364px;top:921px;color:#e6e6e6">汽车配件</div>
<div class="l z" style="left:1462px;top:921px;color:#e6e6e6">山东</div>
<div class="a" style="left:1669px;top:921px;width:33px;height:23px;overflow:hidden"><div class="n" style="left:-89px;top:0;color:#00e600">0183</div></div>
<div class="l" style="left:2px;width:40px;text-align:center;top:944px;color:#e6e6e6">39</div>
<div class="l" style="left:52px;top:944px;color:#e6e6e6">002479</div>
<div class="l z" style="left:117px;top:944px;color:#e6e6e6">富春环保</div>
<div class="n" style="left:156px;top:944px;color:#ff3c3c">0.44</div>
<div class="n" style="left:232px;top:944px;color:#ff3c3c">4.56</div>
<div class="n" style="left:298px;top:944px;color:#ff3c3c">0.02</div>
<div class="n" style="left:375px;top:944px;color:#ff3c3c">4.55</div>
<div class="n" style="left:451px;top:944px;color:#ff3c3c">4.56</div>
<div class="n" style="left:517px;top:944px;color:#d0d000">35803</div>
<div class="n" style="left:585px;top:944px;color:#ff3c3c">69</div>
<div class="n" style="left:643px;top:944px;color:#ff3c3c">0.22</div>
<div class="n" style="left:710px;top:944px;color:#e6e6e6">0.42</div>
<div class="n" style="left:786px;top:944px;color:#e6e6e6">4.54</div>
<div class="n" style="left:862px;top:944px;color:#ff3c3c">4.57</div>
<div class="n" style="left:938px;top:944px;color:#00e600">4.53</div>
<div class="n" style="left:1014px;top:944px;color:#e6e6e6">4.54</div>
<div class="n" style="left:1099px;top:944px;color:#e6e6e6">28.89</div>
<div class="n" style="left:1175px;top:944px;color:#10dcf0">1630万</div>
<div class="n" style="left:1233px;top:944px;color:#00e600">0.61</div>
<div class="n" style="left:1465px;top:944px;color:#e6e6e6">0.88</div>
<div class="n" style="left:1540px;top:944px;color:#ff3c3c">4.55</div>
<div class="n" style="left:1646px;top:944px;color:#ff3c3c">17136</div>
<div class="n" style="left:1715px;top:944px;color:#00e600">1.09</div>
<div class="n" style="left:1782px;top:944px;color:#d0d000">43</div>
<div class="l z" style="left:1364px;top:944px;color:#e6e6e6">环境保护</div>
<div class="l z" style="left:1462px;top:944px;color:#e6e6e6">浙江</div>
<div class="a" style="left:1669px;top:944px;width:33px;height:23px;overflow:hidden"><div class="n" style="left:-89px;top:0;color:#00e600">3667</div></div>
<div class="a" style="left:1906px;top:974px;width:13px;height:15px;border:1px solid #2a2e36"></div>
<svg class="a" style="left:1910px;top:977px" width="6" height="10"><path d="M0 0 L5 4.5 L0 9 Z" fill="#505660"/></svg>
<div class="a" style="left:0;top:973px;width:566px;height:17px;background:#0c0d10"></div>
<div class="btab" style="left:0px;width:47px;color:#e0e0e0;text-align:center">分类<span class="tri">▲</span></div>
<div class="btab" style="left:48px;width:35px;color:#ff3c3c;text-align:center">自选</div>
<div class="btab" style="left:84px;width:47px;color:#e0e0e0;text-align:center">板块<span class="tri">▲</span></div>
<div class="btab" style="left:132px;width:47px;color:#e0e0e0;text-align:center">自定<span class="tri">▲</span></div>
<div class="btab" style="left:180px;width:47px;color:#8a8e96;text-align:center">港股<span class="tri">▲</span></div>
<div class="btab" style="left:228px;width:47px;color:#8a8e96;text-align:center">期权<span class="tri">▲</span></div>
<div class="btab" style="left:276px;width:71px;color:#8a8e96;text-align:center">期货现货<span class="tri">▲</span></div>
<div class="btab" style="left:348px;width:71px;color:#8a8e96;text-align:center">基金理财<span class="tri">▲</span></div>
<div class="btab" style="left:420px;width:70px;color:#8a8e96;text-align:center">美股环球<span class="tri">▲</span></div>
<div class="btab" style="left:491px;width:72px;color:#8a8e96;text-align:center">其它品种<span class="tri">▲</span></div>
<div class="a" style="left:565px;top:974px;width:13px;height:15px;border:1px solid #2a2e36;background:#0c0d10"></div>
<svg class="a" style="left:568px;top:977px" width="6" height="10"><path d="M5 0 L0 4.5 L5 9 Z" fill="#505660"/></svg>
<div class="a" style="left:580px;top:974px;width:37px;height:15px;background:#2a2f38"></div>
<div class="a" style="left:0;top:991px;width:1920px;height:22px;background:#232830"></div>
<div class="a" style="left:0;top:1013px;width:1920px;height:29px;background:#1a1d22"></div>
<div class="a" style="left:0;top:1040px;width:1920px;height:2px;background:#3a3a2c"></div>
<div class="a" style="left:51px;top:1040px;width:48px;height:2px;background:#6a6a5a"></div>
<div class="a" style="left:3px;top:1020px;width:15px;height:15px;border-radius:8px;background:radial-gradient(circle at 50% 30%,#9aa0aa,#5a606a)"></div>
<svg class="a" style="left:5px;top:1022px" width="11" height="11"><path d="M2.5 2.5 L5.5 5 L8.5 2.5 M2.5 5.5 L5.5 8 L8.5 5.5" stroke="#2a2e34" stroke-width="1.3" fill="none"/></svg>
<div class="st" style="left:1754px;top:1011px;font-size:13px;color:#c8c8c8">7x24</div>
<div class="st" style="left:26px;color:#c8c8c8"><span class="stz">上证</span></div>
<div class="st" style="left:55px;color:#4ee82c">3137.36</div>
<div class="st" style="left:112px;color:#4ee82c">-5.42</div>
<div class="st" style="left:152px;color:#4ee82c">-0.17%</div>
<div class="st" style="left:196px;color:#c8c8c8">2785<span class="stz">亿</span></div>
<div class="st" style="left:245px;color:#c8c8c8"><span class="stz">深证</span></div>
<div class="st" style="left:274px;color:#4ee82c">10375.6</div>
<div class="st" style="left:330px;color:#4ee82c">-6.82</div>
<div class="st" style="left:371px;color:#4ee82c">-0.07%</div>
<div class="st" style="left:415px;color:#c8c8c8">4209<span class="stz">亿</span></div>
<div class="st" style="left:465px;color:#c8c8c8"><span class="stz">沪深</span></div>
<div class="st" style="left:494px;color:#4ee82c">3761.19</div>
<div class="st" style="left:550px;color:#4ee82c">-6.35</div>
<div class="st" style="left:592px;color:#4ee82c">-0.17%</div>
<div class="st" style="left:635px;color:#c8c8c8">1385<span class="stz">亿</span></div>
<div class="st" style="left:685px;color:#c8c8c8"><span class="stz">创业</span></div>
<div class="st" style="left:713px;color:#4ee82c">2051.37</div>
<div class="st" style="left:767px;color:#4ee82c">-11.82</div>
<div class="st" style="left:812px;color:#4ee82c">-0.57%</div>
<div class="st" style="left:856px;color:#c8c8c8">2022<span class="stz">亿</span></div>
<div class="st" style="left:905px;color:#c8c8c8"><span class="stz">科创</span></div>
<div class="st" style="left:938px;color:#4ee82c">901.85</div>
<div class="st" style="left:991px;color:#4ee82c">-5.66</div>
<div class="st" style="left:1032px;color:#4ee82c">-0.62%</div>
<div class="st" style="left:1076px;color:#c8c8c8">520.5<span class="stz">亿</span></div>
<div class="st" style="left:1277px;color:#c8c8c8"><span class="stz">北京联通主站</span>Z2</div>
<svg class="a" style="left:1126px;top:1019px" width="108" height="18" viewBox="0 0 108 18"><rect x="2.5" y="2.5" width="49" height="7" fill="#1a1d22" stroke="#f0f0f0" stroke-width="1"/><rect x="12.5" y="3" width="13.6" height="6" fill="#ff0000"/><rect x="26.5" y="3" width="10.5" height="6" fill="#008000"/><path d="M39.3 2.5 V9.5" stroke="#f0f0f0"/><rect x="54.5" y="2.5" width="49" height="7" fill="#1a1d22" stroke="#f0f0f0" stroke-width="1"/><path d="M66.3 2.5 V9.5 M91.3 2.5 V9.5" stroke="#f0f0f0"/><rect x="71.6" y="3" width="6.6" height="6" fill="#ff0000"/><rect x="78.6" y="3" width="4.4" height="6" fill="#008000"/><g fill="#ff0000"><path d="M8.8 10 L5.8 13 H7.8 V17 H9.8 V13 H11.8 Z"/><path d="M48.7 17 L45.7 14 H47.7 V10 H49.7 V14 H51.7 Z"/><path d="M60.8 10 L57.8 13 H59.8 V17 H61.8 V13 H63.8 Z"/><path d="M100.7 17 L97.7 14 H99.7 V10 H101.7 V14 H103.7 Z"/></g><g stroke="#ff0000" stroke-width="1.6"><path d="M14 11.6 H19.6 M22 11.6 H27.6 M30 11.6 H35.6 M38 11.6 H43.6 M14 15 H19.6 M22 15 H27.6 M30 15 H35.6 M38 15 H43.6"/><path d="M66 11.6 H71.6 M74 11.6 H79.6 M82 11.6 H87.6 M90 11.6 H95.6 M66 15 H71.6 M74 15 H79.6 M82 15 H87.6 M90 15 H95.6"/></g></svg>
<div class="a" style="left:1239px;top:1021px;width:15px;height:12px;border-radius:2px;background:linear-gradient(#6a7078,#50565e)"></div>
<div class="a" style="left:1240px;top:1019px;width:13px;font-size:9px;line-height:14px;text-align:center;color:#1a1d22;font-weight:bold">(•)</div>
<div class="a" style="left:1259px;top:1021px;width:15px;height:12px;border-radius:2px;background:linear-gradient(#a0a6ae,#80868e);color:#f0f0f0;font-size:11px;line-height:12px;text-align:center">1</div>
<svg class="a" style="left:1796px;top:1018px" width="110" height="18" viewBox="0 0 110 18"><rect x="2" y="2" width="15" height="12" rx="2" fill="#8a9098"/><path d="M4.5 5 H15 M4.5 7.5 H15" stroke="#2a2e34" stroke-width="1.2" stroke-dasharray="1.2 1"/><path d="M5 10.5 H14" stroke="#2a2e34" stroke-width="1.3"/><rect x="32" y="2" width="15" height="10" rx="2" fill="#8a9098"/><path d="M34 7 H37 L38.5 4.5 L40 9 L41.5 6 H45" stroke="#2a2e34" stroke-width="1.1" fill="none"/><path d="M36 14 H43" stroke="#8a9098" stroke-width="1.4"/><path d="M39.5 12 V14" stroke="#8a9098" stroke-width="1.2"/><path d="M63 2.5 C61 7 64 13 70 13.5 L75 12 Z" fill="#8a9098"/><path d="M67 8.5 L72.5 2.5" stroke="#8a9098" stroke-width="1.4"/><circle cx="73" cy="2.5" r="1.3" fill="#8a9098"/><path d="M62 16 L65 11 L68 16 Z" fill="#8a9098"/><circle cx="99.5" cy="9" r="7.5" fill="#8a9098"/><path d="M101.5 4 L96.5 9.8 H99.5 L97.8 14 L103 8 H100 Z" fill="#1a1d22"/></svg>
<div class="dlg"><div class="a" style="left:0;top:0;width:546px;height:22px;background:#c84146"></div><div class="a" style="left:5px;top:4px;color:#fff">条件选股</div><svg class="a" style="left:505px;top:3px" width="40" height="13"><path d="M6 6.5 H16" stroke="#f0e0e0" stroke-width="1"/><path d="M26 2 L35 11 M35 2 L26 11" stroke="#f0e0e0" stroke-width="1"/></svg><div class="a" style="left:6px;top:36px">条件选股公式</div><div class="fld" style="left:85px;top:30px;width:284px;height:25px"></div><div class="a" style="left:350px;top:31px;width:1px;height:23px;background:#d0d0d0"></div><svg class="a" style="left:354px;top:40px" width="9" height="6"><path d="M0 0 H8 L4 5 Z" fill="#707070"/></svg><div class="a" style="left:89px;top:36px">金山米线</div><div class="a" style="left:157px;top:36px">-</div><div class="btn" style="left:373px;top:30px;width:42px;height:23px">查找</div><div class="btn" style="left:420px;top:30px;width:57px;height:23px">用法注释</div><div class="btn" style="left:481px;top:30px;width:57px;height:23px">查看公式</div><div class="grp" style="left:4px;top:68px;width:210px;height:199px"></div><div class="gl" style="left:11px;top:62px">计算参数</div><div class="a" style="left:11px;top:95px">无参数需要设置</div><div class="a" style="left:13px;top:243px">选股周期:</div><div class="fld" style="left:73px;top:238px;width:128px;height:25px"></div><div class="a" style="left:182px;top:239px;width:1px;height:23px;background:#d0d0d0"></div><svg class="a" style="left:187px;top:248px" width="9" height="6"><path d="M0 0 H8 L4 5 Z" fill="#707070"/></svg><div class="a" style="left:77px;top:243px">日线</div><div class="grp" style="left:4px;top:281px;width:210px;height:143px"></div><div class="gl" style="left:11px;top:275px">选股范围</div><div class="a" style="left:10px;top:296px">上证<span style="margin:0 2px 0 3px">A</span>股&nbsp;&nbsp;深证<span style="margin:0 2px 0 3px">A</span>股</div><div class="btn" style="left:139px;top:289px;width:63px;height:23px">改变范围</div><div class="btn" style="left:223px;top:73px;width:67px;height:23px">加入条件</div><div class="btn" style="left:223px;top:111px;width:67px;height:23px">删除条件</div><div class="btn" style="left:223px;top:184px;width:67px;height:23px">引入方案</div><div class="btn" style="left:223px;top:222px;width:67px;height:23px">保存方案</div><div class="a" style="left:303px;top:59px">选股条件列表</div><div class="fld" style="left:301px;top:75px;width:236px;height:174px"></div><div class="a" style="left:303px;top:77px;width:232px;height:19px;background:#0078d7"></div><div class="a" style="left:305px;top:80px;color:#fff">金山米线&nbsp;&nbsp;&nbsp;&nbsp;日线</div><div class="a" style="left:301px;top:256px;width:12px;height:12px;border-radius:6px;border:1px solid;border-color:#a8a8a8 #dcdcdc #e8e8e8 #b0b0b0;background:#f4f4f4"></div><div class="a" style="left:320px;top:255px;color:#a0a0a0">全部条件相与</div><div class="a" style="left:444px;top:256px;width:12px;height:12px;border-radius:6px;border:1px solid;border-color:#a8a8a8 #dcdcdc #e8e8e8 #b0b0b0;background:#f4f4f4"></div><div class="a" style="left:463px;top:255px;color:#a0a0a0">全部条件相或</div><div class="a" style="left:305px;top:259px;width:4px;height:4px;border-radius:2px;background:#a0a0a0"></div><div class="a" style="left:475px;top:276px;color:#ff0000">选股完毕.</div><div class="cb" style="left:223px;top:298px"></div><div class="a" style="left:241px;top:298px">使用涨跌不定周期</div><div class="fld" style="left:343px;top:298px;width:194px;height:14px;border-color:#c8c8c8;background:#f0f0f0"></div><div class="a" style="left:342px;top:322px">品种数</div><div class="fld" style="left:381px;top:321px;width:42px;height:15px;border-color:#d0d0d0;background:#f0f0f0"></div><div class="a" style="left:383px;top:322px">5065</div><div class="a" style="left:427px;top:322px">选中数</div><div class="fld" style="left:466px;top:321px;width:71px;height:15px;border-color:#d0d0d0;background:#f0f0f0"></div><div class="a" style="left:468px;top:322px">104/2.1%</div><div class="cb" style="left:223px;top:349px"></div><svg class="a" style="left:225px;top:352px" width="9" height="8"><path d="M1 3.5 L3.5 6.5 L8 1" stroke="#10a010" stroke-width="1.8" fill="none"/></svg><div class="a" style="left:241px;top:349px">前复权数据</div><div class="cb" style="left:310px;top:349px"></div><div class="a" style="left:328px;top:349px">剔除当前未交易的品种</div><div class="cb" style="left:457px;top:349px"></div><div class="a" style="left:475px;top:349px">剔除ST品种</div><div class="cb" style="left:223px;top:378px"></div><div class="a" style="left:241px;top:378px">时间段内满足条件</div><div class="btn" style="left:385px;top:372px;width:72px;height:23px">选股入板块</div><div class="btn" style="left:471px;top:372px;width:66px;height:23px">执行选股</div><div class="btn" style="left:471px;top:399px;width:66px;height:23px">关闭</div></div>
</body></html>
